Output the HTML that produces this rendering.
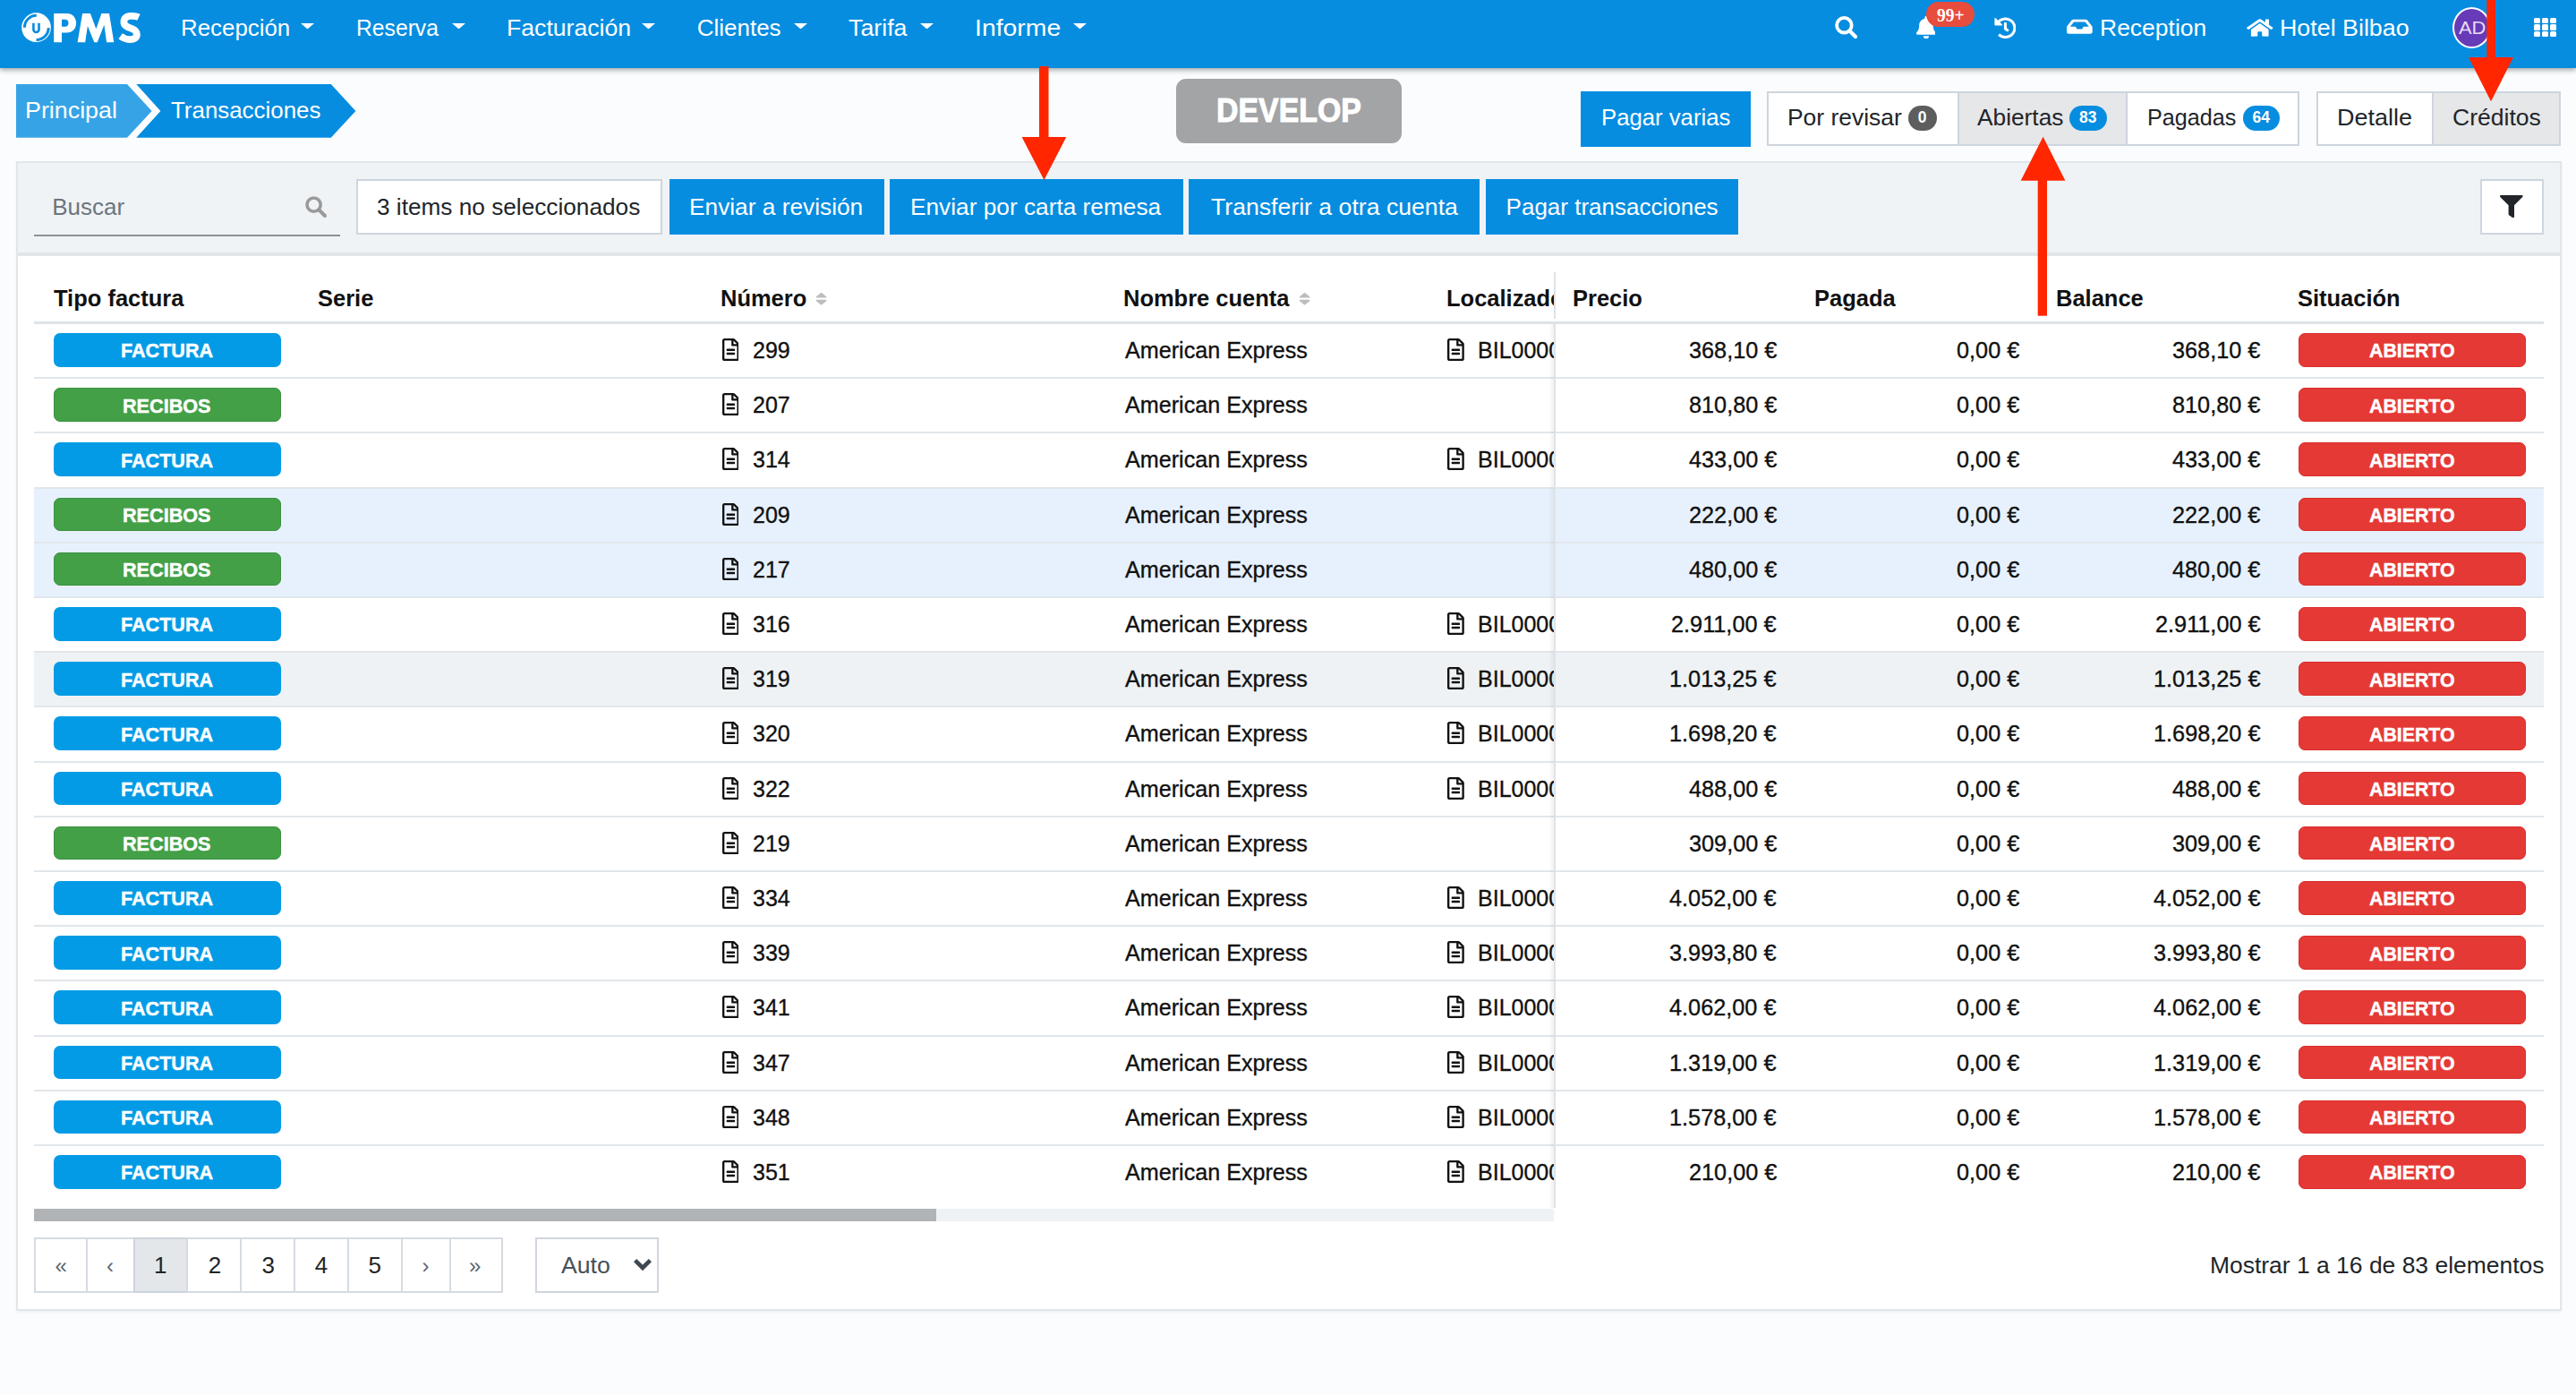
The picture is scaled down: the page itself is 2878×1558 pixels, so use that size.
<!DOCTYPE html>
<html><head><meta charset="utf-8"><style>
html,body{margin:0;padding:0;width:2878px;height:1558px;overflow:hidden;font-family:'Liberation Sans', sans-serif}
</style></head><body>
<div style="position:absolute;left:0px;top:0px;width:2878px;height:1558px;background:#fbfcfd"></div>
<div style="position:absolute;left:0px;top:0px;width:2878px;height:76px;background:#068de0;box-shadow:0 2px 6px rgba(0,0,0,.38)"></div>
<svg style="position:absolute;left:0;top:0" width="170" height="60" viewBox="0 0 170 60">
<circle cx="40.55" cy="30.7" r="16.35" fill="#fff"/>
<path d="M40.8 17.3 A13.4 13.4 0 0 0 27.4 30.7" stroke="#068de0" stroke-width="3.1" fill="none"/>
<path d="M54.3 31.1 A13.6 13.6 0 0 1 40.6 44.4" stroke="#068de0" stroke-width="3" fill="none"/>
<path d="M37.4 25.8 V32.9 a3.05 3.05 0 0 0 6.1 0 V25.8" stroke="#068de0" stroke-width="2.6" fill="none"/>
<path fill="#fff" fill-rule="evenodd" d="M60.2 47.2 V14.9 H74.5 C81 14.9 85.1 19.5 85.1 25.7 C85.1 32 81 36.5 74.5 36.5 H69 V47.2 Z M69 21.8 V29.8 H72.8 C75 29.8 76.5 28.2 76.5 25.8 C76.5 23.4 75 21.8 72.8 21.8 Z"/>
<polygon fill="#fff" points="86.6,47.2 92.1,14.9 100.9,14.9 107.4,32.3 113.4,14.9 122,14.9 127.3,47.2 119.1,47.2 116.4,27.7 108.8,47.2 105.3,47.2 97.9,29 95.2,47.2"/>
<path d="M155 19.2 C151.5 17.5 149 17.8 146 17.8 C141.3 17.8 138.4 20.6 138.4 24.4 C138.4 28.6 142.2 30.2 147 31.9 C151 33.3 152.9 35.2 152.9 38.6 C152.9 42.2 149.6 44.2 145.2 44.2 C141.3 44.2 137.8 42.6 134.6 40.4" stroke="#fff" stroke-width="7.8" fill="none"/>
</svg>
<div style="position:absolute;left:202.41px;top:17.99px;white-space:pre;font-family:'Liberation Sans',sans-serif;font-size:26px;font-weight:400;line-height:26px;color:#fff;transform:scaleX(0.9950);transform-origin:0 0;">Recepción</div>
<svg style="position:absolute;left:336px;top:25.5px" width="15" height="6.5" viewBox="0 0 15 6.5"><path d="M0 0H15L7.5 6.5Z" fill="#fff"/></svg>
<div style="position:absolute;left:398.40px;top:17.99px;white-space:pre;font-family:'Liberation Sans',sans-serif;font-size:26px;font-weight:400;line-height:26px;color:#fff;transform:scaleX(0.9495);transform-origin:0 0;">Reserva</div>
<svg style="position:absolute;left:504.5px;top:25.5px" width="15.0" height="6.5" viewBox="0 0 15.0 6.5"><path d="M0 0H15.0L7.5 6.5Z" fill="#fff"/></svg>
<div style="position:absolute;left:565.75px;top:17.99px;white-space:pre;font-family:'Liberation Sans',sans-serif;font-size:26px;font-weight:400;line-height:26px;color:#fff;transform:scaleX(1.0242);transform-origin:0 0;">Facturación</div>
<svg style="position:absolute;left:717px;top:25.5px" width="15" height="6.5" viewBox="0 0 15 6.5"><path d="M0 0H15L7.5 6.5Z" fill="#fff"/></svg>
<div style="position:absolute;left:778.70px;top:17.99px;white-space:pre;font-family:'Liberation Sans',sans-serif;font-size:26px;font-weight:400;line-height:26px;color:#fff;">Clientes</div>
<svg style="position:absolute;left:886.7px;top:25.5px" width="15.0" height="6.5" viewBox="0 0 15.0 6.5"><path d="M0 0H15.0L7.5 6.5Z" fill="#fff"/></svg>
<div style="position:absolute;left:948.00px;top:17.99px;white-space:pre;font-family:'Liberation Sans',sans-serif;font-size:26px;font-weight:400;line-height:26px;color:#fff;transform:scaleX(1.0297);transform-origin:0 0;">Tarifa</div>
<svg style="position:absolute;left:1028px;top:25.5px" width="15" height="6.5" viewBox="0 0 15 6.5"><path d="M0 0H15L7.5 6.5Z" fill="#fff"/></svg>
<div style="position:absolute;left:1088.52px;top:17.99px;white-space:pre;font-family:'Liberation Sans',sans-serif;font-size:26px;font-weight:400;line-height:26px;color:#fff;transform:scaleX(1.0918);transform-origin:0 0;">Informe</div>
<svg style="position:absolute;left:1198.9px;top:25.5px" width="15.0" height="6.5" viewBox="0 0 15.0 6.5"><path d="M0 0H15.0L7.5 6.5Z" fill="#fff"/></svg>
<div style="position:absolute;left:2345.56px;top:17.99px;white-space:pre;font-family:'Liberation Sans',sans-serif;font-size:26px;font-weight:400;line-height:26px;color:#fff;transform:scaleX(1.0186);transform-origin:0 0;">Reception</div>
<div style="position:absolute;left:2547.44px;top:17.99px;white-space:pre;font-family:'Liberation Sans',sans-serif;font-size:26px;font-weight:400;line-height:26px;color:#fff;transform:scaleX(1.0314);transform-origin:0 0;">Hotel Bilbao</div>
<svg style="position:absolute;left:0;top:0" width="420" height="170">
<polygon points="18,94 142,94 169.6,124 142,153.7 18,153.7" fill="#36a3e6"/>
<polygon points="152.3,94 369.8,94 397.4,124 369.8,153.7 152.3,153.7 179.4,124" fill="#068de0"/>
</svg>
<div style="position:absolute;left:27.84px;top:109.89px;white-space:pre;font-family:'Liberation Sans',sans-serif;font-size:26px;font-weight:400;line-height:26px;color:#fff;transform:scaleX(1.0323);transform-origin:0 0;">Principal</div>
<div style="position:absolute;left:191.40px;top:109.89px;white-space:pre;font-family:'Liberation Sans',sans-serif;font-size:26px;font-weight:400;line-height:26px;color:#fff;transform:scaleX(0.9958);transform-origin:0 0;">Transacciones</div>
<div style="position:absolute;left:1314px;top:88px;width:252px;height:72px;background:#a3a4a6;border-radius:11px"></div>
<div style="position:absolute;left:1358.67px;top:104.98px;white-space:pre;font-family:'Liberation Sans',sans-serif;font-size:37px;font-weight:700;line-height:37px;color:#fff;transform:scaleX(0.9155);transform-origin:0 0;-webkit-text-stroke:1px #fff;">DEVELOP</div>
<div style="position:absolute;left:1766px;top:102px;width:190px;height:62px;background:#068de0"></div>
<div style="position:absolute;left:1788.92px;top:118.39px;white-space:pre;font-family:'Liberation Sans',sans-serif;font-size:26px;font-weight:400;line-height:26px;color:#fff;transform:scaleX(0.9888);transform-origin:0 0;">Pagar varias</div>
<div style="position:absolute;left:1974.3px;top:102.3px;width:594.7px;height:61.10000000000001px;background:#fff;border:2px solid #cdd5de;box-sizing:border-box"></div>
<div style="position:absolute;left:2186.5px;top:102.3px;width:190.9000000000001px;height:61.10000000000001px;background:#e6e7e9;border:2px solid #cdd5de;box-sizing:border-box"></div>
<div style="position:absolute;left:2588.3px;top:102.3px;width:273.0px;height:61.10000000000001px;background:#fff;border:2px solid #cdd5de;box-sizing:border-box"></div>
<div style="position:absolute;left:2716.6px;top:102.3px;width:144.70000000000027px;height:61.10000000000001px;background:#e6e7e9;border:2px solid #cdd5de;box-sizing:border-box"></div>
<div style="position:absolute;left:1996.97px;top:118.19px;white-space:pre;font-family:'Liberation Sans',sans-serif;font-size:26px;font-weight:400;line-height:26px;color:#212529;transform:scaleX(1.0163);transform-origin:0 0;">Por revisar</div>
<div style="position:absolute;left:2132px;top:118px;width:31.59999999999991px;height:27.69999999999999px;background:#5d5d5d;border-radius:14px"></div>
<div style="position:absolute;left:2142.80px;top:122.79px;white-space:pre;font-family:'Liberation Sans',sans-serif;font-size:17.5px;font-weight:700;line-height:17.5px;color:#fff;">0</div>
<div style="position:absolute;left:2209.00px;top:118.19px;white-space:pre;font-family:'Liberation Sans',sans-serif;font-size:26px;font-weight:400;line-height:26px;color:#212529;transform:scaleX(1.0105);transform-origin:0 0;">Abiertas</div>
<div style="position:absolute;left:2312px;top:118px;width:41.69999999999982px;height:27.69999999999999px;background:#068de0;border-radius:14px"></div>
<div style="position:absolute;left:2323.00px;top:122.79px;white-space:pre;font-family:'Liberation Sans',sans-serif;font-size:17.5px;font-weight:700;line-height:17.5px;color:#fff;">83</div>
<div style="position:absolute;left:2398.86px;top:118.19px;white-space:pre;font-family:'Liberation Sans',sans-serif;font-size:26px;font-weight:400;line-height:26px;color:#212529;transform:scaleX(0.9690);transform-origin:0 0;">Pagadas</div>
<div style="position:absolute;left:2506.4px;top:118px;width:41.09999999999991px;height:27.69999999999999px;background:#068de0;border-radius:14px"></div>
<div style="position:absolute;left:2516.50px;top:122.79px;white-space:pre;font-family:'Liberation Sans',sans-serif;font-size:17.5px;font-weight:700;line-height:17.5px;color:#fff;">64</div>
<div style="position:absolute;left:2610.63px;top:118.19px;white-space:pre;font-family:'Liberation Sans',sans-serif;font-size:26px;font-weight:400;line-height:26px;color:#212529;transform:scaleX(1.0372);transform-origin:0 0;">Detalle</div>
<div style="position:absolute;left:2739.58px;top:118.19px;white-space:pre;font-family:'Liberation Sans',sans-serif;font-size:26px;font-weight:400;line-height:26px;color:#212529;transform:scaleX(1.0211);transform-origin:0 0;">Créditos</div>
<div style="position:absolute;left:18px;top:179.5px;width:2844px;height:1284.5px;background:#fff;border:2px solid #e1e6ea;box-sizing:border-box;box-shadow:0 2px 3px rgba(0,0,0,.05)"></div>
<div style="position:absolute;left:18px;top:179.5px;width:2844px;height:106.5px;background:#eff3f6;border:2px solid #e1e6ea;border-bottom-width:4px;box-sizing:border-box"></div>
<div style="position:absolute;left:38px;top:261.8px;width:342px;height:2.3999999999999773px;background:#8f9194"></div>
<div style="position:absolute;left:58.21px;top:217.89px;white-space:pre;font-family:'Liberation Sans',sans-serif;font-size:26px;font-weight:400;line-height:26px;color:#6c757d;">Buscar</div>
<div style="position:absolute;left:398px;top:200px;width:341.5px;height:62px;background:#fff;border:2px solid #cdd5de;box-sizing:border-box"></div>
<div style="position:absolute;left:420.99px;top:217.89px;white-space:pre;font-family:'Liberation Sans',sans-serif;font-size:26px;font-weight:400;line-height:26px;color:#212529;transform:scaleX(1.0079);transform-origin:0 0;">3 items no seleccionados</div>
<div style="position:absolute;left:748px;top:200px;width:240px;height:62px;background:#068de0"></div>
<div style="position:absolute;left:770.48px;top:217.89px;white-space:pre;font-family:'Liberation Sans',sans-serif;font-size:26px;font-weight:400;line-height:26px;color:#fff;transform:scaleX(1.0106);transform-origin:0 0;">Enviar a revisión</div>
<div style="position:absolute;left:994.4px;top:200px;width:327.19999999999993px;height:62px;background:#068de0"></div>
<div style="position:absolute;left:1016.78px;top:217.89px;white-space:pre;font-family:'Liberation Sans',sans-serif;font-size:26px;font-weight:400;line-height:26px;color:#fff;transform:scaleX(1.0098);transform-origin:0 0;">Enviar por carta remesa</div>
<div style="position:absolute;left:1328.2px;top:200px;width:325.29999999999995px;height:62px;background:#068de0"></div>
<div style="position:absolute;left:1352.70px;top:217.89px;white-space:pre;font-family:'Liberation Sans',sans-serif;font-size:26px;font-weight:400;line-height:26px;color:#fff;transform:scaleX(1.0245);transform-origin:0 0;">Transferir a otra cuenta</div>
<div style="position:absolute;left:1660px;top:200px;width:281.5999999999999px;height:62px;background:#068de0"></div>
<div style="position:absolute;left:1682.60px;top:217.89px;white-space:pre;font-family:'Liberation Sans',sans-serif;font-size:26px;font-weight:400;line-height:26px;color:#fff;">Pagar transacciones</div>
<div style="position:absolute;left:2771px;top:200px;width:70.5px;height:62px;background:#fff;border:2px solid #cdd5de;box-sizing:border-box"></div>
<div style="position:absolute;left:60.10px;top:320.19px;white-space:pre;font-family:'Liberation Sans',sans-serif;font-size:26px;font-weight:700;line-height:26px;color:#111;transform:scaleX(0.9800);transform-origin:0 0;">Tipo factura</div>
<div style="position:absolute;left:355.42px;top:320.19px;white-space:pre;font-family:'Liberation Sans',sans-serif;font-size:26px;font-weight:700;line-height:26px;color:#111;transform:scaleX(0.9800);transform-origin:0 0;">Serie</div>
<div style="position:absolute;left:805.04px;top:320.19px;white-space:pre;font-family:'Liberation Sans',sans-serif;font-size:26px;font-weight:700;line-height:26px;color:#111;transform:scaleX(0.9800);transform-origin:0 0;">Número</div>
<div style="position:absolute;left:1254.74px;top:320.19px;white-space:pre;font-family:'Liberation Sans',sans-serif;font-size:26px;font-weight:700;line-height:26px;color:#111;transform:scaleX(0.9800);transform-origin:0 0;">Nombre cuenta</div>
<div style="position:absolute;left:1756.54px;top:320.19px;white-space:pre;font-family:'Liberation Sans',sans-serif;font-size:26px;font-weight:700;line-height:26px;color:#111;transform:scaleX(0.9800);transform-origin:0 0;">Precio</div>
<div style="position:absolute;left:2026.54px;top:320.19px;white-space:pre;font-family:'Liberation Sans',sans-serif;font-size:26px;font-weight:700;line-height:26px;color:#111;transform:scaleX(0.9800);transform-origin:0 0;">Pagada</div>
<div style="position:absolute;left:2297.04px;top:320.19px;white-space:pre;font-family:'Liberation Sans',sans-serif;font-size:26px;font-weight:700;line-height:26px;color:#111;transform:scaleX(0.9800);transform-origin:0 0;">Balance</div>
<div style="position:absolute;left:2567.02px;top:320.19px;white-space:pre;font-family:'Liberation Sans',sans-serif;font-size:26px;font-weight:700;line-height:26px;color:#111;transform:scaleX(0.9800);transform-origin:0 0;">Situación</div>
<div style="position:absolute;left:1596px;top:0;width:140px;height:1558px;overflow:hidden"><div style="position:absolute;left:19.64px;top:320.19px;white-space:pre;font-family:'Liberation Sans',sans-serif;font-size:26px;font-weight:700;line-height:26px;color:#111;transform:scaleX(0.9800);transform-origin:0 0;">Localizador</div></div>
<div style="position:absolute;left:38px;top:358.5px;width:2804px;height:3.5px;background:#dee3e8"></div>
<div style="position:absolute;left:38px;top:421.2px;width:2804px;height:2.0px;background:#e1e6ea"></div>
<div style="position:absolute;left:60px;top:372.0px;width:254px;height:37.69999999999999px;background:#039be5;border-radius:7px"></div>
<div style="position:absolute;left:135.02px;top:381.38px;white-space:pre;font-family:'Liberation Sans',sans-serif;font-size:22px;font-weight:700;line-height:22px;color:#fff;transform:scaleX(0.9808);transform-origin:0 0;-webkit-text-stroke:0.45px #fff;">FACTURA</div>
<div style="position:absolute;left:841.24px;top:377.99px;white-space:pre;font-family:'Liberation Sans',sans-serif;font-size:26px;font-weight:400;line-height:26px;color:#111;transform:scaleX(0.9620);transform-origin:0 0;-webkit-text-stroke:0.35px #111;">299</div>
<svg style="position:absolute;left:806.7px;top:378.0px" width="18.80" height="25.00" viewBox="0 0 384 512" preserveAspectRatio="none"><path d="M288 248v28c0 6.6-5.4 12-12 12H108c-6.6 0-12-5.4-12-12v-28c0-6.6 5.4-12 12-12h168c6.6 0 12 5.4 12 12zm-12 72H108c-6.6 0-12 5.4-12 12v28c0 6.6 5.4 12 12 12h168c6.6 0 12-5.4 12-12v-28c0-6.6-5.4-12-12-12zm108-188.1V464c0 26.5-21.5 48-48 48H48c-26.5 0-48-21.5-48-48V48C0 21.5 21.5 0 48 0h204.1C264.8 0 277 5.1 286 14.1L369.9 98c9 8.9 14.1 21.2 14.1 33.9zm-128-80V128h76.1L256 51.9zM336 464V176H232c-13.3 0-24-10.7-24-24V48H48v416h288z" fill="#111" /></svg>
<svg style="position:absolute;left:1616.9px;top:378.0px" width="18.80" height="25.00" viewBox="0 0 384 512" preserveAspectRatio="none"><path d="M288 248v28c0 6.6-5.4 12-12 12H108c-6.6 0-12-5.4-12-12v-28c0-6.6 5.4-12 12-12h168c6.6 0 12 5.4 12 12zm-12 72H108c-6.6 0-12 5.4-12 12v28c0 6.6 5.4 12 12 12h168c6.6 0 12-5.4 12-12v-28c0-6.6-5.4-12-12-12zm108-188.1V464c0 26.5-21.5 48-48 48H48c-26.5 0-48-21.5-48-48V48C0 21.5 21.5 0 48 0h204.1C264.8 0 277 5.1 286 14.1L369.9 98c9 8.9 14.1 21.2 14.1 33.9zm-128-80V128h76.1L256 51.9zM336 464V176H232c-13.3 0-24-10.7-24-24V48H48v416h288z" fill="#111" /></svg>
<div style="position:absolute;left:1596px;top:0;width:140px;height:1558px;overflow:hidden"><div style="position:absolute;left:55.08px;top:377.99px;white-space:pre;font-family:'Liberation Sans',sans-serif;font-size:26px;font-weight:400;line-height:26px;color:#111;transform:scaleX(0.9620);transform-origin:0 0;-webkit-text-stroke:0.35px #111;">BIL0000299</div></div>
<div style="position:absolute;left:1256.80px;top:377.99px;white-space:pre;font-family:'Liberation Sans',sans-serif;font-size:26px;font-weight:400;line-height:26px;color:#111;transform:scaleX(0.9667);transform-origin:0 0;-webkit-text-stroke:0.35px #111;">American Express</div>
<div style="position:absolute;left:1886.83px;top:377.99px;white-space:pre;font-family:'Liberation Sans',sans-serif;font-size:26px;font-weight:400;line-height:26px;color:#111;transform:scaleX(0.9720);transform-origin:0 0;-webkit-text-stroke:0.35px #111;">368,10 €</div>
<div style="position:absolute;left:2185.52px;top:377.99px;white-space:pre;font-family:'Liberation Sans',sans-serif;font-size:26px;font-weight:400;line-height:26px;color:#111;transform:scaleX(0.9720);transform-origin:0 0;-webkit-text-stroke:0.35px #111;">0,00 €</div>
<div style="position:absolute;left:2427.33px;top:377.99px;white-space:pre;font-family:'Liberation Sans',sans-serif;font-size:26px;font-weight:400;line-height:26px;color:#111;transform:scaleX(0.9720);transform-origin:0 0;-webkit-text-stroke:0.35px #111;">368,10 €</div>
<div style="position:absolute;left:2568px;top:372.0px;width:254px;height:37.69999999999999px;background:#e53935;border:1px solid #d8302c;box-sizing:border-box;border-radius:7px"></div>
<div style="position:absolute;left:2647.25px;top:381.38px;white-space:pre;font-family:'Liberation Sans',sans-serif;font-size:22px;font-weight:700;line-height:22px;color:#fff;transform:scaleX(0.9694);transform-origin:0 0;-webkit-text-stroke:0.45px #fff;">ABIERTO</div>
<div style="position:absolute;left:38px;top:482.4px;width:2804px;height:2.0px;background:#e1e6ea"></div>
<div style="position:absolute;left:60px;top:433.2px;width:254px;height:37.69999999999999px;background:#43a047;border:1px solid #3b9140;box-sizing:border-box;border-radius:7px"></div>
<div style="position:absolute;left:137.37px;top:442.58px;white-space:pre;font-family:'Liberation Sans',sans-serif;font-size:22px;font-weight:700;line-height:22px;color:#fff;transform:scaleX(0.9828);transform-origin:0 0;-webkit-text-stroke:0.45px #fff;">RECIBOS</div>
<div style="position:absolute;left:841.24px;top:439.19px;white-space:pre;font-family:'Liberation Sans',sans-serif;font-size:26px;font-weight:400;line-height:26px;color:#111;transform:scaleX(0.9620);transform-origin:0 0;-webkit-text-stroke:0.35px #111;">207</div>
<svg style="position:absolute;left:806.7px;top:439.2px" width="18.80" height="25.00" viewBox="0 0 384 512" preserveAspectRatio="none"><path d="M288 248v28c0 6.6-5.4 12-12 12H108c-6.6 0-12-5.4-12-12v-28c0-6.6 5.4-12 12-12h168c6.6 0 12 5.4 12 12zm-12 72H108c-6.6 0-12 5.4-12 12v28c0 6.6 5.4 12 12 12h168c6.6 0 12-5.4 12-12v-28c0-6.6-5.4-12-12-12zm108-188.1V464c0 26.5-21.5 48-48 48H48c-26.5 0-48-21.5-48-48V48C0 21.5 21.5 0 48 0h204.1C264.8 0 277 5.1 286 14.1L369.9 98c9 8.9 14.1 21.2 14.1 33.9zm-128-80V128h76.1L256 51.9zM336 464V176H232c-13.3 0-24-10.7-24-24V48H48v416h288z" fill="#111" /></svg>
<div style="position:absolute;left:1256.80px;top:439.19px;white-space:pre;font-family:'Liberation Sans',sans-serif;font-size:26px;font-weight:400;line-height:26px;color:#111;transform:scaleX(0.9667);transform-origin:0 0;-webkit-text-stroke:0.35px #111;">American Express</div>
<div style="position:absolute;left:1886.83px;top:439.19px;white-space:pre;font-family:'Liberation Sans',sans-serif;font-size:26px;font-weight:400;line-height:26px;color:#111;transform:scaleX(0.9720);transform-origin:0 0;-webkit-text-stroke:0.35px #111;">810,80 €</div>
<div style="position:absolute;left:2185.52px;top:439.19px;white-space:pre;font-family:'Liberation Sans',sans-serif;font-size:26px;font-weight:400;line-height:26px;color:#111;transform:scaleX(0.9720);transform-origin:0 0;-webkit-text-stroke:0.35px #111;">0,00 €</div>
<div style="position:absolute;left:2427.33px;top:439.19px;white-space:pre;font-family:'Liberation Sans',sans-serif;font-size:26px;font-weight:400;line-height:26px;color:#111;transform:scaleX(0.9720);transform-origin:0 0;-webkit-text-stroke:0.35px #111;">810,80 €</div>
<div style="position:absolute;left:2568px;top:433.2px;width:254px;height:37.69999999999999px;background:#e53935;border:1px solid #d8302c;box-sizing:border-box;border-radius:7px"></div>
<div style="position:absolute;left:2647.25px;top:442.58px;white-space:pre;font-family:'Liberation Sans',sans-serif;font-size:22px;font-weight:700;line-height:22px;color:#fff;transform:scaleX(0.9694);transform-origin:0 0;-webkit-text-stroke:0.45px #fff;">ABIERTO</div>
<div style="position:absolute;left:38px;top:543.6px;width:2804px;height:2.0px;background:#e1e6ea"></div>
<div style="position:absolute;left:60px;top:494.4px;width:254px;height:37.700000000000045px;background:#039be5;border-radius:7px"></div>
<div style="position:absolute;left:135.02px;top:503.78px;white-space:pre;font-family:'Liberation Sans',sans-serif;font-size:22px;font-weight:700;line-height:22px;color:#fff;transform:scaleX(0.9808);transform-origin:0 0;-webkit-text-stroke:0.45px #fff;">FACTURA</div>
<div style="position:absolute;left:841.24px;top:500.39px;white-space:pre;font-family:'Liberation Sans',sans-serif;font-size:26px;font-weight:400;line-height:26px;color:#111;transform:scaleX(0.9620);transform-origin:0 0;-webkit-text-stroke:0.35px #111;">314</div>
<svg style="position:absolute;left:806.7px;top:500.4px" width="18.80" height="25.00" viewBox="0 0 384 512" preserveAspectRatio="none"><path d="M288 248v28c0 6.6-5.4 12-12 12H108c-6.6 0-12-5.4-12-12v-28c0-6.6 5.4-12 12-12h168c6.6 0 12 5.4 12 12zm-12 72H108c-6.6 0-12 5.4-12 12v28c0 6.6 5.4 12 12 12h168c6.6 0 12-5.4 12-12v-28c0-6.6-5.4-12-12-12zm108-188.1V464c0 26.5-21.5 48-48 48H48c-26.5 0-48-21.5-48-48V48C0 21.5 21.5 0 48 0h204.1C264.8 0 277 5.1 286 14.1L369.9 98c9 8.9 14.1 21.2 14.1 33.9zm-128-80V128h76.1L256 51.9zM336 464V176H232c-13.3 0-24-10.7-24-24V48H48v416h288z" fill="#111" /></svg>
<svg style="position:absolute;left:1616.9px;top:500.4px" width="18.80" height="25.00" viewBox="0 0 384 512" preserveAspectRatio="none"><path d="M288 248v28c0 6.6-5.4 12-12 12H108c-6.6 0-12-5.4-12-12v-28c0-6.6 5.4-12 12-12h168c6.6 0 12 5.4 12 12zm-12 72H108c-6.6 0-12 5.4-12 12v28c0 6.6 5.4 12 12 12h168c6.6 0 12-5.4 12-12v-28c0-6.6-5.4-12-12-12zm108-188.1V464c0 26.5-21.5 48-48 48H48c-26.5 0-48-21.5-48-48V48C0 21.5 21.5 0 48 0h204.1C264.8 0 277 5.1 286 14.1L369.9 98c9 8.9 14.1 21.2 14.1 33.9zm-128-80V128h76.1L256 51.9zM336 464V176H232c-13.3 0-24-10.7-24-24V48H48v416h288z" fill="#111" /></svg>
<div style="position:absolute;left:1596px;top:0;width:140px;height:1558px;overflow:hidden"><div style="position:absolute;left:55.08px;top:500.39px;white-space:pre;font-family:'Liberation Sans',sans-serif;font-size:26px;font-weight:400;line-height:26px;color:#111;transform:scaleX(0.9620);transform-origin:0 0;-webkit-text-stroke:0.35px #111;">BIL0000314</div></div>
<div style="position:absolute;left:1256.80px;top:500.39px;white-space:pre;font-family:'Liberation Sans',sans-serif;font-size:26px;font-weight:400;line-height:26px;color:#111;transform:scaleX(0.9667);transform-origin:0 0;-webkit-text-stroke:0.35px #111;">American Express</div>
<div style="position:absolute;left:1886.83px;top:500.39px;white-space:pre;font-family:'Liberation Sans',sans-serif;font-size:26px;font-weight:400;line-height:26px;color:#111;transform:scaleX(0.9720);transform-origin:0 0;-webkit-text-stroke:0.35px #111;">433,00 €</div>
<div style="position:absolute;left:2185.52px;top:500.39px;white-space:pre;font-family:'Liberation Sans',sans-serif;font-size:26px;font-weight:400;line-height:26px;color:#111;transform:scaleX(0.9720);transform-origin:0 0;-webkit-text-stroke:0.35px #111;">0,00 €</div>
<div style="position:absolute;left:2427.33px;top:500.39px;white-space:pre;font-family:'Liberation Sans',sans-serif;font-size:26px;font-weight:400;line-height:26px;color:#111;transform:scaleX(0.9720);transform-origin:0 0;-webkit-text-stroke:0.35px #111;">433,00 €</div>
<div style="position:absolute;left:2568px;top:494.4px;width:254px;height:37.700000000000045px;background:#e53935;border:1px solid #d8302c;box-sizing:border-box;border-radius:7px"></div>
<div style="position:absolute;left:2647.25px;top:503.78px;white-space:pre;font-family:'Liberation Sans',sans-serif;font-size:22px;font-weight:700;line-height:22px;color:#fff;transform:scaleX(0.9694);transform-origin:0 0;-webkit-text-stroke:0.45px #fff;">ABIERTO</div>
<div style="position:absolute;left:38px;top:545.6px;width:2804px;height:61.200000000000045px;background:#e7f1fd"></div>
<div style="position:absolute;left:38px;top:604.8000000000001px;width:2804px;height:2.0px;background:#e1e6ea"></div>
<div style="position:absolute;left:60px;top:555.6px;width:254px;height:37.700000000000045px;background:#43a047;border:1px solid #3b9140;box-sizing:border-box;border-radius:7px"></div>
<div style="position:absolute;left:137.37px;top:564.98px;white-space:pre;font-family:'Liberation Sans',sans-serif;font-size:22px;font-weight:700;line-height:22px;color:#fff;transform:scaleX(0.9828);transform-origin:0 0;-webkit-text-stroke:0.45px #fff;">RECIBOS</div>
<div style="position:absolute;left:841.24px;top:561.59px;white-space:pre;font-family:'Liberation Sans',sans-serif;font-size:26px;font-weight:400;line-height:26px;color:#111;transform:scaleX(0.9620);transform-origin:0 0;-webkit-text-stroke:0.35px #111;">209</div>
<svg style="position:absolute;left:806.7px;top:561.6px" width="18.80" height="25.00" viewBox="0 0 384 512" preserveAspectRatio="none"><path d="M288 248v28c0 6.6-5.4 12-12 12H108c-6.6 0-12-5.4-12-12v-28c0-6.6 5.4-12 12-12h168c6.6 0 12 5.4 12 12zm-12 72H108c-6.6 0-12 5.4-12 12v28c0 6.6 5.4 12 12 12h168c6.6 0 12-5.4 12-12v-28c0-6.6-5.4-12-12-12zm108-188.1V464c0 26.5-21.5 48-48 48H48c-26.5 0-48-21.5-48-48V48C0 21.5 21.5 0 48 0h204.1C264.8 0 277 5.1 286 14.1L369.9 98c9 8.9 14.1 21.2 14.1 33.9zm-128-80V128h76.1L256 51.9zM336 464V176H232c-13.3 0-24-10.7-24-24V48H48v416h288z" fill="#111" /></svg>
<div style="position:absolute;left:1256.80px;top:561.59px;white-space:pre;font-family:'Liberation Sans',sans-serif;font-size:26px;font-weight:400;line-height:26px;color:#111;transform:scaleX(0.9667);transform-origin:0 0;-webkit-text-stroke:0.35px #111;">American Express</div>
<div style="position:absolute;left:1886.83px;top:561.59px;white-space:pre;font-family:'Liberation Sans',sans-serif;font-size:26px;font-weight:400;line-height:26px;color:#111;transform:scaleX(0.9720);transform-origin:0 0;-webkit-text-stroke:0.35px #111;">222,00 €</div>
<div style="position:absolute;left:2185.52px;top:561.59px;white-space:pre;font-family:'Liberation Sans',sans-serif;font-size:26px;font-weight:400;line-height:26px;color:#111;transform:scaleX(0.9720);transform-origin:0 0;-webkit-text-stroke:0.35px #111;">0,00 €</div>
<div style="position:absolute;left:2427.33px;top:561.59px;white-space:pre;font-family:'Liberation Sans',sans-serif;font-size:26px;font-weight:400;line-height:26px;color:#111;transform:scaleX(0.9720);transform-origin:0 0;-webkit-text-stroke:0.35px #111;">222,00 €</div>
<div style="position:absolute;left:2568px;top:555.6px;width:254px;height:37.700000000000045px;background:#e53935;border:1px solid #d8302c;box-sizing:border-box;border-radius:7px"></div>
<div style="position:absolute;left:2647.25px;top:564.98px;white-space:pre;font-family:'Liberation Sans',sans-serif;font-size:22px;font-weight:700;line-height:22px;color:#fff;transform:scaleX(0.9694);transform-origin:0 0;-webkit-text-stroke:0.45px #fff;">ABIERTO</div>
<div style="position:absolute;left:38px;top:606.8px;width:2804px;height:61.200000000000045px;background:#e7f1fd"></div>
<div style="position:absolute;left:38px;top:666.0px;width:2804px;height:2.0px;background:#e1e6ea"></div>
<div style="position:absolute;left:60px;top:616.8px;width:254px;height:37.700000000000045px;background:#43a047;border:1px solid #3b9140;box-sizing:border-box;border-radius:7px"></div>
<div style="position:absolute;left:137.37px;top:626.18px;white-space:pre;font-family:'Liberation Sans',sans-serif;font-size:22px;font-weight:700;line-height:22px;color:#fff;transform:scaleX(0.9828);transform-origin:0 0;-webkit-text-stroke:0.45px #fff;">RECIBOS</div>
<div style="position:absolute;left:841.24px;top:622.79px;white-space:pre;font-family:'Liberation Sans',sans-serif;font-size:26px;font-weight:400;line-height:26px;color:#111;transform:scaleX(0.9620);transform-origin:0 0;-webkit-text-stroke:0.35px #111;">217</div>
<svg style="position:absolute;left:806.7px;top:622.8px" width="18.80" height="25.00" viewBox="0 0 384 512" preserveAspectRatio="none"><path d="M288 248v28c0 6.6-5.4 12-12 12H108c-6.6 0-12-5.4-12-12v-28c0-6.6 5.4-12 12-12h168c6.6 0 12 5.4 12 12zm-12 72H108c-6.6 0-12 5.4-12 12v28c0 6.6 5.4 12 12 12h168c6.6 0 12-5.4 12-12v-28c0-6.6-5.4-12-12-12zm108-188.1V464c0 26.5-21.5 48-48 48H48c-26.5 0-48-21.5-48-48V48C0 21.5 21.5 0 48 0h204.1C264.8 0 277 5.1 286 14.1L369.9 98c9 8.9 14.1 21.2 14.1 33.9zm-128-80V128h76.1L256 51.9zM336 464V176H232c-13.3 0-24-10.7-24-24V48H48v416h288z" fill="#111" /></svg>
<div style="position:absolute;left:1256.80px;top:622.79px;white-space:pre;font-family:'Liberation Sans',sans-serif;font-size:26px;font-weight:400;line-height:26px;color:#111;transform:scaleX(0.9667);transform-origin:0 0;-webkit-text-stroke:0.35px #111;">American Express</div>
<div style="position:absolute;left:1886.83px;top:622.79px;white-space:pre;font-family:'Liberation Sans',sans-serif;font-size:26px;font-weight:400;line-height:26px;color:#111;transform:scaleX(0.9720);transform-origin:0 0;-webkit-text-stroke:0.35px #111;">480,00 €</div>
<div style="position:absolute;left:2185.52px;top:622.79px;white-space:pre;font-family:'Liberation Sans',sans-serif;font-size:26px;font-weight:400;line-height:26px;color:#111;transform:scaleX(0.9720);transform-origin:0 0;-webkit-text-stroke:0.35px #111;">0,00 €</div>
<div style="position:absolute;left:2427.33px;top:622.79px;white-space:pre;font-family:'Liberation Sans',sans-serif;font-size:26px;font-weight:400;line-height:26px;color:#111;transform:scaleX(0.9720);transform-origin:0 0;-webkit-text-stroke:0.35px #111;">480,00 €</div>
<div style="position:absolute;left:2568px;top:616.8px;width:254px;height:37.700000000000045px;background:#e53935;border:1px solid #d8302c;box-sizing:border-box;border-radius:7px"></div>
<div style="position:absolute;left:2647.25px;top:626.18px;white-space:pre;font-family:'Liberation Sans',sans-serif;font-size:22px;font-weight:700;line-height:22px;color:#fff;transform:scaleX(0.9694);transform-origin:0 0;-webkit-text-stroke:0.45px #fff;">ABIERTO</div>
<div style="position:absolute;left:38px;top:727.2px;width:2804px;height:2.0px;background:#e1e6ea"></div>
<div style="position:absolute;left:60px;top:678.0px;width:254px;height:37.700000000000045px;background:#039be5;border-radius:7px"></div>
<div style="position:absolute;left:135.02px;top:687.38px;white-space:pre;font-family:'Liberation Sans',sans-serif;font-size:22px;font-weight:700;line-height:22px;color:#fff;transform:scaleX(0.9808);transform-origin:0 0;-webkit-text-stroke:0.45px #fff;">FACTURA</div>
<div style="position:absolute;left:841.24px;top:683.99px;white-space:pre;font-family:'Liberation Sans',sans-serif;font-size:26px;font-weight:400;line-height:26px;color:#111;transform:scaleX(0.9620);transform-origin:0 0;-webkit-text-stroke:0.35px #111;">316</div>
<svg style="position:absolute;left:806.7px;top:684.0px" width="18.80" height="25.00" viewBox="0 0 384 512" preserveAspectRatio="none"><path d="M288 248v28c0 6.6-5.4 12-12 12H108c-6.6 0-12-5.4-12-12v-28c0-6.6 5.4-12 12-12h168c6.6 0 12 5.4 12 12zm-12 72H108c-6.6 0-12 5.4-12 12v28c0 6.6 5.4 12 12 12h168c6.6 0 12-5.4 12-12v-28c0-6.6-5.4-12-12-12zm108-188.1V464c0 26.5-21.5 48-48 48H48c-26.5 0-48-21.5-48-48V48C0 21.5 21.5 0 48 0h204.1C264.8 0 277 5.1 286 14.1L369.9 98c9 8.9 14.1 21.2 14.1 33.9zm-128-80V128h76.1L256 51.9zM336 464V176H232c-13.3 0-24-10.7-24-24V48H48v416h288z" fill="#111" /></svg>
<svg style="position:absolute;left:1616.9px;top:684.0px" width="18.80" height="25.00" viewBox="0 0 384 512" preserveAspectRatio="none"><path d="M288 248v28c0 6.6-5.4 12-12 12H108c-6.6 0-12-5.4-12-12v-28c0-6.6 5.4-12 12-12h168c6.6 0 12 5.4 12 12zm-12 72H108c-6.6 0-12 5.4-12 12v28c0 6.6 5.4 12 12 12h168c6.6 0 12-5.4 12-12v-28c0-6.6-5.4-12-12-12zm108-188.1V464c0 26.5-21.5 48-48 48H48c-26.5 0-48-21.5-48-48V48C0 21.5 21.5 0 48 0h204.1C264.8 0 277 5.1 286 14.1L369.9 98c9 8.9 14.1 21.2 14.1 33.9zm-128-80V128h76.1L256 51.9zM336 464V176H232c-13.3 0-24-10.7-24-24V48H48v416h288z" fill="#111" /></svg>
<div style="position:absolute;left:1596px;top:0;width:140px;height:1558px;overflow:hidden"><div style="position:absolute;left:55.08px;top:683.99px;white-space:pre;font-family:'Liberation Sans',sans-serif;font-size:26px;font-weight:400;line-height:26px;color:#111;transform:scaleX(0.9620);transform-origin:0 0;-webkit-text-stroke:0.35px #111;">BIL0000316</div></div>
<div style="position:absolute;left:1256.80px;top:683.99px;white-space:pre;font-family:'Liberation Sans',sans-serif;font-size:26px;font-weight:400;line-height:26px;color:#111;transform:scaleX(0.9667);transform-origin:0 0;-webkit-text-stroke:0.35px #111;">American Express</div>
<div style="position:absolute;left:1867.39px;top:683.99px;white-space:pre;font-family:'Liberation Sans',sans-serif;font-size:26px;font-weight:400;line-height:26px;color:#111;transform:scaleX(0.9720);transform-origin:0 0;-webkit-text-stroke:0.35px #111;">2.911,00 €</div>
<div style="position:absolute;left:2185.52px;top:683.99px;white-space:pre;font-family:'Liberation Sans',sans-serif;font-size:26px;font-weight:400;line-height:26px;color:#111;transform:scaleX(0.9720);transform-origin:0 0;-webkit-text-stroke:0.35px #111;">0,00 €</div>
<div style="position:absolute;left:2407.89px;top:683.99px;white-space:pre;font-family:'Liberation Sans',sans-serif;font-size:26px;font-weight:400;line-height:26px;color:#111;transform:scaleX(0.9720);transform-origin:0 0;-webkit-text-stroke:0.35px #111;">2.911,00 €</div>
<div style="position:absolute;left:2568px;top:678.0px;width:254px;height:37.700000000000045px;background:#e53935;border:1px solid #d8302c;box-sizing:border-box;border-radius:7px"></div>
<div style="position:absolute;left:2647.25px;top:687.38px;white-space:pre;font-family:'Liberation Sans',sans-serif;font-size:22px;font-weight:700;line-height:22px;color:#fff;transform:scaleX(0.9694);transform-origin:0 0;-webkit-text-stroke:0.45px #fff;">ABIERTO</div>
<div style="position:absolute;left:38px;top:729.2px;width:2804px;height:61.200000000000045px;background:#eef2f5"></div>
<div style="position:absolute;left:38px;top:788.4000000000001px;width:2804px;height:2.0px;background:#e1e6ea"></div>
<div style="position:absolute;left:60px;top:739.2px;width:254px;height:37.700000000000045px;background:#039be5;border-radius:7px"></div>
<div style="position:absolute;left:135.02px;top:748.58px;white-space:pre;font-family:'Liberation Sans',sans-serif;font-size:22px;font-weight:700;line-height:22px;color:#fff;transform:scaleX(0.9808);transform-origin:0 0;-webkit-text-stroke:0.45px #fff;">FACTURA</div>
<div style="position:absolute;left:841.24px;top:745.19px;white-space:pre;font-family:'Liberation Sans',sans-serif;font-size:26px;font-weight:400;line-height:26px;color:#111;transform:scaleX(0.9620);transform-origin:0 0;-webkit-text-stroke:0.35px #111;">319</div>
<svg style="position:absolute;left:806.7px;top:745.2px" width="18.80" height="25.00" viewBox="0 0 384 512" preserveAspectRatio="none"><path d="M288 248v28c0 6.6-5.4 12-12 12H108c-6.6 0-12-5.4-12-12v-28c0-6.6 5.4-12 12-12h168c6.6 0 12 5.4 12 12zm-12 72H108c-6.6 0-12 5.4-12 12v28c0 6.6 5.4 12 12 12h168c6.6 0 12-5.4 12-12v-28c0-6.6-5.4-12-12-12zm108-188.1V464c0 26.5-21.5 48-48 48H48c-26.5 0-48-21.5-48-48V48C0 21.5 21.5 0 48 0h204.1C264.8 0 277 5.1 286 14.1L369.9 98c9 8.9 14.1 21.2 14.1 33.9zm-128-80V128h76.1L256 51.9zM336 464V176H232c-13.3 0-24-10.7-24-24V48H48v416h288z" fill="#111" /></svg>
<svg style="position:absolute;left:1616.9px;top:745.2px" width="18.80" height="25.00" viewBox="0 0 384 512" preserveAspectRatio="none"><path d="M288 248v28c0 6.6-5.4 12-12 12H108c-6.6 0-12-5.4-12-12v-28c0-6.6 5.4-12 12-12h168c6.6 0 12 5.4 12 12zm-12 72H108c-6.6 0-12 5.4-12 12v28c0 6.6 5.4 12 12 12h168c6.6 0 12-5.4 12-12v-28c0-6.6-5.4-12-12-12zm108-188.1V464c0 26.5-21.5 48-48 48H48c-26.5 0-48-21.5-48-48V48C0 21.5 21.5 0 48 0h204.1C264.8 0 277 5.1 286 14.1L369.9 98c9 8.9 14.1 21.2 14.1 33.9zm-128-80V128h76.1L256 51.9zM336 464V176H232c-13.3 0-24-10.7-24-24V48H48v416h288z" fill="#111" /></svg>
<div style="position:absolute;left:1596px;top:0;width:140px;height:1558px;overflow:hidden"><div style="position:absolute;left:55.08px;top:745.19px;white-space:pre;font-family:'Liberation Sans',sans-serif;font-size:26px;font-weight:400;line-height:26px;color:#111;transform:scaleX(0.9620);transform-origin:0 0;-webkit-text-stroke:0.35px #111;">BIL0000319</div></div>
<div style="position:absolute;left:1256.80px;top:745.19px;white-space:pre;font-family:'Liberation Sans',sans-serif;font-size:26px;font-weight:400;line-height:26px;color:#111;transform:scaleX(0.9667);transform-origin:0 0;-webkit-text-stroke:0.35px #111;">American Express</div>
<div style="position:absolute;left:1865.44px;top:745.19px;white-space:pre;font-family:'Liberation Sans',sans-serif;font-size:26px;font-weight:400;line-height:26px;color:#111;transform:scaleX(0.9720);transform-origin:0 0;-webkit-text-stroke:0.35px #111;">1.013,25 €</div>
<div style="position:absolute;left:2185.52px;top:745.19px;white-space:pre;font-family:'Liberation Sans',sans-serif;font-size:26px;font-weight:400;line-height:26px;color:#111;transform:scaleX(0.9720);transform-origin:0 0;-webkit-text-stroke:0.35px #111;">0,00 €</div>
<div style="position:absolute;left:2405.94px;top:745.19px;white-space:pre;font-family:'Liberation Sans',sans-serif;font-size:26px;font-weight:400;line-height:26px;color:#111;transform:scaleX(0.9720);transform-origin:0 0;-webkit-text-stroke:0.35px #111;">1.013,25 €</div>
<div style="position:absolute;left:2568px;top:739.2px;width:254px;height:37.700000000000045px;background:#e53935;border:1px solid #d8302c;box-sizing:border-box;border-radius:7px"></div>
<div style="position:absolute;left:2647.25px;top:748.58px;white-space:pre;font-family:'Liberation Sans',sans-serif;font-size:22px;font-weight:700;line-height:22px;color:#fff;transform:scaleX(0.9694);transform-origin:0 0;-webkit-text-stroke:0.45px #fff;">ABIERTO</div>
<div style="position:absolute;left:38px;top:849.6000000000001px;width:2804px;height:2.0px;background:#e1e6ea"></div>
<div style="position:absolute;left:60px;top:800.4000000000001px;width:254px;height:37.700000000000045px;background:#039be5;border-radius:7px"></div>
<div style="position:absolute;left:135.02px;top:809.78px;white-space:pre;font-family:'Liberation Sans',sans-serif;font-size:22px;font-weight:700;line-height:22px;color:#fff;transform:scaleX(0.9808);transform-origin:0 0;-webkit-text-stroke:0.45px #fff;">FACTURA</div>
<div style="position:absolute;left:841.24px;top:806.39px;white-space:pre;font-family:'Liberation Sans',sans-serif;font-size:26px;font-weight:400;line-height:26px;color:#111;transform:scaleX(0.9620);transform-origin:0 0;-webkit-text-stroke:0.35px #111;">320</div>
<svg style="position:absolute;left:806.7px;top:806.4000000000001px" width="18.80" height="25.00" viewBox="0 0 384 512" preserveAspectRatio="none"><path d="M288 248v28c0 6.6-5.4 12-12 12H108c-6.6 0-12-5.4-12-12v-28c0-6.6 5.4-12 12-12h168c6.6 0 12 5.4 12 12zm-12 72H108c-6.6 0-12 5.4-12 12v28c0 6.6 5.4 12 12 12h168c6.6 0 12-5.4 12-12v-28c0-6.6-5.4-12-12-12zm108-188.1V464c0 26.5-21.5 48-48 48H48c-26.5 0-48-21.5-48-48V48C0 21.5 21.5 0 48 0h204.1C264.8 0 277 5.1 286 14.1L369.9 98c9 8.9 14.1 21.2 14.1 33.9zm-128-80V128h76.1L256 51.9zM336 464V176H232c-13.3 0-24-10.7-24-24V48H48v416h288z" fill="#111" /></svg>
<svg style="position:absolute;left:1616.9px;top:806.4000000000001px" width="18.80" height="25.00" viewBox="0 0 384 512" preserveAspectRatio="none"><path d="M288 248v28c0 6.6-5.4 12-12 12H108c-6.6 0-12-5.4-12-12v-28c0-6.6 5.4-12 12-12h168c6.6 0 12 5.4 12 12zm-12 72H108c-6.6 0-12 5.4-12 12v28c0 6.6 5.4 12 12 12h168c6.6 0 12-5.4 12-12v-28c0-6.6-5.4-12-12-12zm108-188.1V464c0 26.5-21.5 48-48 48H48c-26.5 0-48-21.5-48-48V48C0 21.5 21.5 0 48 0h204.1C264.8 0 277 5.1 286 14.1L369.9 98c9 8.9 14.1 21.2 14.1 33.9zm-128-80V128h76.1L256 51.9zM336 464V176H232c-13.3 0-24-10.7-24-24V48H48v416h288z" fill="#111" /></svg>
<div style="position:absolute;left:1596px;top:0;width:140px;height:1558px;overflow:hidden"><div style="position:absolute;left:55.08px;top:806.39px;white-space:pre;font-family:'Liberation Sans',sans-serif;font-size:26px;font-weight:400;line-height:26px;color:#111;transform:scaleX(0.9620);transform-origin:0 0;-webkit-text-stroke:0.35px #111;">BIL0000320</div></div>
<div style="position:absolute;left:1256.80px;top:806.39px;white-space:pre;font-family:'Liberation Sans',sans-serif;font-size:26px;font-weight:400;line-height:26px;color:#111;transform:scaleX(0.9667);transform-origin:0 0;-webkit-text-stroke:0.35px #111;">American Express</div>
<div style="position:absolute;left:1865.44px;top:806.39px;white-space:pre;font-family:'Liberation Sans',sans-serif;font-size:26px;font-weight:400;line-height:26px;color:#111;transform:scaleX(0.9720);transform-origin:0 0;-webkit-text-stroke:0.35px #111;">1.698,20 €</div>
<div style="position:absolute;left:2185.52px;top:806.39px;white-space:pre;font-family:'Liberation Sans',sans-serif;font-size:26px;font-weight:400;line-height:26px;color:#111;transform:scaleX(0.9720);transform-origin:0 0;-webkit-text-stroke:0.35px #111;">0,00 €</div>
<div style="position:absolute;left:2405.94px;top:806.39px;white-space:pre;font-family:'Liberation Sans',sans-serif;font-size:26px;font-weight:400;line-height:26px;color:#111;transform:scaleX(0.9720);transform-origin:0 0;-webkit-text-stroke:0.35px #111;">1.698,20 €</div>
<div style="position:absolute;left:2568px;top:800.4000000000001px;width:254px;height:37.700000000000045px;background:#e53935;border:1px solid #d8302c;box-sizing:border-box;border-radius:7px"></div>
<div style="position:absolute;left:2647.25px;top:809.78px;white-space:pre;font-family:'Liberation Sans',sans-serif;font-size:22px;font-weight:700;line-height:22px;color:#fff;transform:scaleX(0.9694);transform-origin:0 0;-webkit-text-stroke:0.45px #fff;">ABIERTO</div>
<div style="position:absolute;left:38px;top:910.8000000000001px;width:2804px;height:2.0px;background:#e1e6ea"></div>
<div style="position:absolute;left:60px;top:861.6px;width:254px;height:37.700000000000045px;background:#039be5;border-radius:7px"></div>
<div style="position:absolute;left:135.02px;top:870.98px;white-space:pre;font-family:'Liberation Sans',sans-serif;font-size:22px;font-weight:700;line-height:22px;color:#fff;transform:scaleX(0.9808);transform-origin:0 0;-webkit-text-stroke:0.45px #fff;">FACTURA</div>
<div style="position:absolute;left:841.24px;top:867.59px;white-space:pre;font-family:'Liberation Sans',sans-serif;font-size:26px;font-weight:400;line-height:26px;color:#111;transform:scaleX(0.9620);transform-origin:0 0;-webkit-text-stroke:0.35px #111;">322</div>
<svg style="position:absolute;left:806.7px;top:867.6px" width="18.80" height="25.00" viewBox="0 0 384 512" preserveAspectRatio="none"><path d="M288 248v28c0 6.6-5.4 12-12 12H108c-6.6 0-12-5.4-12-12v-28c0-6.6 5.4-12 12-12h168c6.6 0 12 5.4 12 12zm-12 72H108c-6.6 0-12 5.4-12 12v28c0 6.6 5.4 12 12 12h168c6.6 0 12-5.4 12-12v-28c0-6.6-5.4-12-12-12zm108-188.1V464c0 26.5-21.5 48-48 48H48c-26.5 0-48-21.5-48-48V48C0 21.5 21.5 0 48 0h204.1C264.8 0 277 5.1 286 14.1L369.9 98c9 8.9 14.1 21.2 14.1 33.9zm-128-80V128h76.1L256 51.9zM336 464V176H232c-13.3 0-24-10.7-24-24V48H48v416h288z" fill="#111" /></svg>
<svg style="position:absolute;left:1616.9px;top:867.6px" width="18.80" height="25.00" viewBox="0 0 384 512" preserveAspectRatio="none"><path d="M288 248v28c0 6.6-5.4 12-12 12H108c-6.6 0-12-5.4-12-12v-28c0-6.6 5.4-12 12-12h168c6.6 0 12 5.4 12 12zm-12 72H108c-6.6 0-12 5.4-12 12v28c0 6.6 5.4 12 12 12h168c6.6 0 12-5.4 12-12v-28c0-6.6-5.4-12-12-12zm108-188.1V464c0 26.5-21.5 48-48 48H48c-26.5 0-48-21.5-48-48V48C0 21.5 21.5 0 48 0h204.1C264.8 0 277 5.1 286 14.1L369.9 98c9 8.9 14.1 21.2 14.1 33.9zm-128-80V128h76.1L256 51.9zM336 464V176H232c-13.3 0-24-10.7-24-24V48H48v416h288z" fill="#111" /></svg>
<div style="position:absolute;left:1596px;top:0;width:140px;height:1558px;overflow:hidden"><div style="position:absolute;left:55.08px;top:867.59px;white-space:pre;font-family:'Liberation Sans',sans-serif;font-size:26px;font-weight:400;line-height:26px;color:#111;transform:scaleX(0.9620);transform-origin:0 0;-webkit-text-stroke:0.35px #111;">BIL0000322</div></div>
<div style="position:absolute;left:1256.80px;top:867.59px;white-space:pre;font-family:'Liberation Sans',sans-serif;font-size:26px;font-weight:400;line-height:26px;color:#111;transform:scaleX(0.9667);transform-origin:0 0;-webkit-text-stroke:0.35px #111;">American Express</div>
<div style="position:absolute;left:1886.83px;top:867.59px;white-space:pre;font-family:'Liberation Sans',sans-serif;font-size:26px;font-weight:400;line-height:26px;color:#111;transform:scaleX(0.9720);transform-origin:0 0;-webkit-text-stroke:0.35px #111;">488,00 €</div>
<div style="position:absolute;left:2185.52px;top:867.59px;white-space:pre;font-family:'Liberation Sans',sans-serif;font-size:26px;font-weight:400;line-height:26px;color:#111;transform:scaleX(0.9720);transform-origin:0 0;-webkit-text-stroke:0.35px #111;">0,00 €</div>
<div style="position:absolute;left:2427.33px;top:867.59px;white-space:pre;font-family:'Liberation Sans',sans-serif;font-size:26px;font-weight:400;line-height:26px;color:#111;transform:scaleX(0.9720);transform-origin:0 0;-webkit-text-stroke:0.35px #111;">488,00 €</div>
<div style="position:absolute;left:2568px;top:861.6px;width:254px;height:37.700000000000045px;background:#e53935;border:1px solid #d8302c;box-sizing:border-box;border-radius:7px"></div>
<div style="position:absolute;left:2647.25px;top:870.98px;white-space:pre;font-family:'Liberation Sans',sans-serif;font-size:22px;font-weight:700;line-height:22px;color:#fff;transform:scaleX(0.9694);transform-origin:0 0;-webkit-text-stroke:0.45px #fff;">ABIERTO</div>
<div style="position:absolute;left:38px;top:972.0000000000001px;width:2804px;height:2.0px;background:#e1e6ea"></div>
<div style="position:absolute;left:60px;top:922.8000000000001px;width:254px;height:37.700000000000045px;background:#43a047;border:1px solid #3b9140;box-sizing:border-box;border-radius:7px"></div>
<div style="position:absolute;left:137.37px;top:932.18px;white-space:pre;font-family:'Liberation Sans',sans-serif;font-size:22px;font-weight:700;line-height:22px;color:#fff;transform:scaleX(0.9828);transform-origin:0 0;-webkit-text-stroke:0.45px #fff;">RECIBOS</div>
<div style="position:absolute;left:841.24px;top:928.79px;white-space:pre;font-family:'Liberation Sans',sans-serif;font-size:26px;font-weight:400;line-height:26px;color:#111;transform:scaleX(0.9620);transform-origin:0 0;-webkit-text-stroke:0.35px #111;">219</div>
<svg style="position:absolute;left:806.7px;top:928.8000000000001px" width="18.80" height="25.00" viewBox="0 0 384 512" preserveAspectRatio="none"><path d="M288 248v28c0 6.6-5.4 12-12 12H108c-6.6 0-12-5.4-12-12v-28c0-6.6 5.4-12 12-12h168c6.6 0 12 5.4 12 12zm-12 72H108c-6.6 0-12 5.4-12 12v28c0 6.6 5.4 12 12 12h168c6.6 0 12-5.4 12-12v-28c0-6.6-5.4-12-12-12zm108-188.1V464c0 26.5-21.5 48-48 48H48c-26.5 0-48-21.5-48-48V48C0 21.5 21.5 0 48 0h204.1C264.8 0 277 5.1 286 14.1L369.9 98c9 8.9 14.1 21.2 14.1 33.9zm-128-80V128h76.1L256 51.9zM336 464V176H232c-13.3 0-24-10.7-24-24V48H48v416h288z" fill="#111" /></svg>
<div style="position:absolute;left:1256.80px;top:928.79px;white-space:pre;font-family:'Liberation Sans',sans-serif;font-size:26px;font-weight:400;line-height:26px;color:#111;transform:scaleX(0.9667);transform-origin:0 0;-webkit-text-stroke:0.35px #111;">American Express</div>
<div style="position:absolute;left:1886.83px;top:928.79px;white-space:pre;font-family:'Liberation Sans',sans-serif;font-size:26px;font-weight:400;line-height:26px;color:#111;transform:scaleX(0.9720);transform-origin:0 0;-webkit-text-stroke:0.35px #111;">309,00 €</div>
<div style="position:absolute;left:2185.52px;top:928.79px;white-space:pre;font-family:'Liberation Sans',sans-serif;font-size:26px;font-weight:400;line-height:26px;color:#111;transform:scaleX(0.9720);transform-origin:0 0;-webkit-text-stroke:0.35px #111;">0,00 €</div>
<div style="position:absolute;left:2427.33px;top:928.79px;white-space:pre;font-family:'Liberation Sans',sans-serif;font-size:26px;font-weight:400;line-height:26px;color:#111;transform:scaleX(0.9720);transform-origin:0 0;-webkit-text-stroke:0.35px #111;">309,00 €</div>
<div style="position:absolute;left:2568px;top:922.8000000000001px;width:254px;height:37.700000000000045px;background:#e53935;border:1px solid #d8302c;box-sizing:border-box;border-radius:7px"></div>
<div style="position:absolute;left:2647.25px;top:932.18px;white-space:pre;font-family:'Liberation Sans',sans-serif;font-size:22px;font-weight:700;line-height:22px;color:#fff;transform:scaleX(0.9694);transform-origin:0 0;-webkit-text-stroke:0.45px #fff;">ABIERTO</div>
<div style="position:absolute;left:38px;top:1033.2px;width:2804px;height:2.0px;background:#e1e6ea"></div>
<div style="position:absolute;left:60px;top:984.0px;width:254px;height:37.700000000000045px;background:#039be5;border-radius:7px"></div>
<div style="position:absolute;left:135.02px;top:993.38px;white-space:pre;font-family:'Liberation Sans',sans-serif;font-size:22px;font-weight:700;line-height:22px;color:#fff;transform:scaleX(0.9808);transform-origin:0 0;-webkit-text-stroke:0.45px #fff;">FACTURA</div>
<div style="position:absolute;left:841.24px;top:989.99px;white-space:pre;font-family:'Liberation Sans',sans-serif;font-size:26px;font-weight:400;line-height:26px;color:#111;transform:scaleX(0.9620);transform-origin:0 0;-webkit-text-stroke:0.35px #111;">334</div>
<svg style="position:absolute;left:806.7px;top:990.0px" width="18.80" height="25.00" viewBox="0 0 384 512" preserveAspectRatio="none"><path d="M288 248v28c0 6.6-5.4 12-12 12H108c-6.6 0-12-5.4-12-12v-28c0-6.6 5.4-12 12-12h168c6.6 0 12 5.4 12 12zm-12 72H108c-6.6 0-12 5.4-12 12v28c0 6.6 5.4 12 12 12h168c6.6 0 12-5.4 12-12v-28c0-6.6-5.4-12-12-12zm108-188.1V464c0 26.5-21.5 48-48 48H48c-26.5 0-48-21.5-48-48V48C0 21.5 21.5 0 48 0h204.1C264.8 0 277 5.1 286 14.1L369.9 98c9 8.9 14.1 21.2 14.1 33.9zm-128-80V128h76.1L256 51.9zM336 464V176H232c-13.3 0-24-10.7-24-24V48H48v416h288z" fill="#111" /></svg>
<svg style="position:absolute;left:1616.9px;top:990.0px" width="18.80" height="25.00" viewBox="0 0 384 512" preserveAspectRatio="none"><path d="M288 248v28c0 6.6-5.4 12-12 12H108c-6.6 0-12-5.4-12-12v-28c0-6.6 5.4-12 12-12h168c6.6 0 12 5.4 12 12zm-12 72H108c-6.6 0-12 5.4-12 12v28c0 6.6 5.4 12 12 12h168c6.6 0 12-5.4 12-12v-28c0-6.6-5.4-12-12-12zm108-188.1V464c0 26.5-21.5 48-48 48H48c-26.5 0-48-21.5-48-48V48C0 21.5 21.5 0 48 0h204.1C264.8 0 277 5.1 286 14.1L369.9 98c9 8.9 14.1 21.2 14.1 33.9zm-128-80V128h76.1L256 51.9zM336 464V176H232c-13.3 0-24-10.7-24-24V48H48v416h288z" fill="#111" /></svg>
<div style="position:absolute;left:1596px;top:0;width:140px;height:1558px;overflow:hidden"><div style="position:absolute;left:55.08px;top:989.99px;white-space:pre;font-family:'Liberation Sans',sans-serif;font-size:26px;font-weight:400;line-height:26px;color:#111;transform:scaleX(0.9620);transform-origin:0 0;-webkit-text-stroke:0.35px #111;">BIL0000334</div></div>
<div style="position:absolute;left:1256.80px;top:989.99px;white-space:pre;font-family:'Liberation Sans',sans-serif;font-size:26px;font-weight:400;line-height:26px;color:#111;transform:scaleX(0.9667);transform-origin:0 0;-webkit-text-stroke:0.35px #111;">American Express</div>
<div style="position:absolute;left:1865.44px;top:989.99px;white-space:pre;font-family:'Liberation Sans',sans-serif;font-size:26px;font-weight:400;line-height:26px;color:#111;transform:scaleX(0.9720);transform-origin:0 0;-webkit-text-stroke:0.35px #111;">4.052,00 €</div>
<div style="position:absolute;left:2185.52px;top:989.99px;white-space:pre;font-family:'Liberation Sans',sans-serif;font-size:26px;font-weight:400;line-height:26px;color:#111;transform:scaleX(0.9720);transform-origin:0 0;-webkit-text-stroke:0.35px #111;">0,00 €</div>
<div style="position:absolute;left:2405.94px;top:989.99px;white-space:pre;font-family:'Liberation Sans',sans-serif;font-size:26px;font-weight:400;line-height:26px;color:#111;transform:scaleX(0.9720);transform-origin:0 0;-webkit-text-stroke:0.35px #111;">4.052,00 €</div>
<div style="position:absolute;left:2568px;top:984.0px;width:254px;height:37.700000000000045px;background:#e53935;border:1px solid #d8302c;box-sizing:border-box;border-radius:7px"></div>
<div style="position:absolute;left:2647.25px;top:993.38px;white-space:pre;font-family:'Liberation Sans',sans-serif;font-size:22px;font-weight:700;line-height:22px;color:#fff;transform:scaleX(0.9694);transform-origin:0 0;-webkit-text-stroke:0.45px #fff;">ABIERTO</div>
<div style="position:absolute;left:38px;top:1094.4px;width:2804px;height:2.0px;background:#e1e6ea"></div>
<div style="position:absolute;left:60px;top:1045.2px;width:254px;height:37.700000000000045px;background:#039be5;border-radius:7px"></div>
<div style="position:absolute;left:135.02px;top:1054.58px;white-space:pre;font-family:'Liberation Sans',sans-serif;font-size:22px;font-weight:700;line-height:22px;color:#fff;transform:scaleX(0.9808);transform-origin:0 0;-webkit-text-stroke:0.45px #fff;">FACTURA</div>
<div style="position:absolute;left:841.24px;top:1051.19px;white-space:pre;font-family:'Liberation Sans',sans-serif;font-size:26px;font-weight:400;line-height:26px;color:#111;transform:scaleX(0.9620);transform-origin:0 0;-webkit-text-stroke:0.35px #111;">339</div>
<svg style="position:absolute;left:806.7px;top:1051.2px" width="18.80" height="25.00" viewBox="0 0 384 512" preserveAspectRatio="none"><path d="M288 248v28c0 6.6-5.4 12-12 12H108c-6.6 0-12-5.4-12-12v-28c0-6.6 5.4-12 12-12h168c6.6 0 12 5.4 12 12zm-12 72H108c-6.6 0-12 5.4-12 12v28c0 6.6 5.4 12 12 12h168c6.6 0 12-5.4 12-12v-28c0-6.6-5.4-12-12-12zm108-188.1V464c0 26.5-21.5 48-48 48H48c-26.5 0-48-21.5-48-48V48C0 21.5 21.5 0 48 0h204.1C264.8 0 277 5.1 286 14.1L369.9 98c9 8.9 14.1 21.2 14.1 33.9zm-128-80V128h76.1L256 51.9zM336 464V176H232c-13.3 0-24-10.7-24-24V48H48v416h288z" fill="#111" /></svg>
<svg style="position:absolute;left:1616.9px;top:1051.2px" width="18.80" height="25.00" viewBox="0 0 384 512" preserveAspectRatio="none"><path d="M288 248v28c0 6.6-5.4 12-12 12H108c-6.6 0-12-5.4-12-12v-28c0-6.6 5.4-12 12-12h168c6.6 0 12 5.4 12 12zm-12 72H108c-6.6 0-12 5.4-12 12v28c0 6.6 5.4 12 12 12h168c6.6 0 12-5.4 12-12v-28c0-6.6-5.4-12-12-12zm108-188.1V464c0 26.5-21.5 48-48 48H48c-26.5 0-48-21.5-48-48V48C0 21.5 21.5 0 48 0h204.1C264.8 0 277 5.1 286 14.1L369.9 98c9 8.9 14.1 21.2 14.1 33.9zm-128-80V128h76.1L256 51.9zM336 464V176H232c-13.3 0-24-10.7-24-24V48H48v416h288z" fill="#111" /></svg>
<div style="position:absolute;left:1596px;top:0;width:140px;height:1558px;overflow:hidden"><div style="position:absolute;left:55.08px;top:1051.19px;white-space:pre;font-family:'Liberation Sans',sans-serif;font-size:26px;font-weight:400;line-height:26px;color:#111;transform:scaleX(0.9620);transform-origin:0 0;-webkit-text-stroke:0.35px #111;">BIL0000339</div></div>
<div style="position:absolute;left:1256.80px;top:1051.19px;white-space:pre;font-family:'Liberation Sans',sans-serif;font-size:26px;font-weight:400;line-height:26px;color:#111;transform:scaleX(0.9667);transform-origin:0 0;-webkit-text-stroke:0.35px #111;">American Express</div>
<div style="position:absolute;left:1865.44px;top:1051.19px;white-space:pre;font-family:'Liberation Sans',sans-serif;font-size:26px;font-weight:400;line-height:26px;color:#111;transform:scaleX(0.9720);transform-origin:0 0;-webkit-text-stroke:0.35px #111;">3.993,80 €</div>
<div style="position:absolute;left:2185.52px;top:1051.19px;white-space:pre;font-family:'Liberation Sans',sans-serif;font-size:26px;font-weight:400;line-height:26px;color:#111;transform:scaleX(0.9720);transform-origin:0 0;-webkit-text-stroke:0.35px #111;">0,00 €</div>
<div style="position:absolute;left:2405.94px;top:1051.19px;white-space:pre;font-family:'Liberation Sans',sans-serif;font-size:26px;font-weight:400;line-height:26px;color:#111;transform:scaleX(0.9720);transform-origin:0 0;-webkit-text-stroke:0.35px #111;">3.993,80 €</div>
<div style="position:absolute;left:2568px;top:1045.2px;width:254px;height:37.700000000000045px;background:#e53935;border:1px solid #d8302c;box-sizing:border-box;border-radius:7px"></div>
<div style="position:absolute;left:2647.25px;top:1054.58px;white-space:pre;font-family:'Liberation Sans',sans-serif;font-size:22px;font-weight:700;line-height:22px;color:#fff;transform:scaleX(0.9694);transform-origin:0 0;-webkit-text-stroke:0.45px #fff;">ABIERTO</div>
<div style="position:absolute;left:38px;top:1155.6000000000001px;width:2804px;height:2.0px;background:#e1e6ea"></div>
<div style="position:absolute;left:60px;top:1106.4px;width:254px;height:37.700000000000045px;background:#039be5;border-radius:7px"></div>
<div style="position:absolute;left:135.02px;top:1115.78px;white-space:pre;font-family:'Liberation Sans',sans-serif;font-size:22px;font-weight:700;line-height:22px;color:#fff;transform:scaleX(0.9808);transform-origin:0 0;-webkit-text-stroke:0.45px #fff;">FACTURA</div>
<div style="position:absolute;left:841.24px;top:1112.39px;white-space:pre;font-family:'Liberation Sans',sans-serif;font-size:26px;font-weight:400;line-height:26px;color:#111;transform:scaleX(0.9620);transform-origin:0 0;-webkit-text-stroke:0.35px #111;">341</div>
<svg style="position:absolute;left:806.7px;top:1112.4px" width="18.80" height="25.00" viewBox="0 0 384 512" preserveAspectRatio="none"><path d="M288 248v28c0 6.6-5.4 12-12 12H108c-6.6 0-12-5.4-12-12v-28c0-6.6 5.4-12 12-12h168c6.6 0 12 5.4 12 12zm-12 72H108c-6.6 0-12 5.4-12 12v28c0 6.6 5.4 12 12 12h168c6.6 0 12-5.4 12-12v-28c0-6.6-5.4-12-12-12zm108-188.1V464c0 26.5-21.5 48-48 48H48c-26.5 0-48-21.5-48-48V48C0 21.5 21.5 0 48 0h204.1C264.8 0 277 5.1 286 14.1L369.9 98c9 8.9 14.1 21.2 14.1 33.9zm-128-80V128h76.1L256 51.9zM336 464V176H232c-13.3 0-24-10.7-24-24V48H48v416h288z" fill="#111" /></svg>
<svg style="position:absolute;left:1616.9px;top:1112.4px" width="18.80" height="25.00" viewBox="0 0 384 512" preserveAspectRatio="none"><path d="M288 248v28c0 6.6-5.4 12-12 12H108c-6.6 0-12-5.4-12-12v-28c0-6.6 5.4-12 12-12h168c6.6 0 12 5.4 12 12zm-12 72H108c-6.6 0-12 5.4-12 12v28c0 6.6 5.4 12 12 12h168c6.6 0 12-5.4 12-12v-28c0-6.6-5.4-12-12-12zm108-188.1V464c0 26.5-21.5 48-48 48H48c-26.5 0-48-21.5-48-48V48C0 21.5 21.5 0 48 0h204.1C264.8 0 277 5.1 286 14.1L369.9 98c9 8.9 14.1 21.2 14.1 33.9zm-128-80V128h76.1L256 51.9zM336 464V176H232c-13.3 0-24-10.7-24-24V48H48v416h288z" fill="#111" /></svg>
<div style="position:absolute;left:1596px;top:0;width:140px;height:1558px;overflow:hidden"><div style="position:absolute;left:55.08px;top:1112.39px;white-space:pre;font-family:'Liberation Sans',sans-serif;font-size:26px;font-weight:400;line-height:26px;color:#111;transform:scaleX(0.9620);transform-origin:0 0;-webkit-text-stroke:0.35px #111;">BIL0000341</div></div>
<div style="position:absolute;left:1256.80px;top:1112.39px;white-space:pre;font-family:'Liberation Sans',sans-serif;font-size:26px;font-weight:400;line-height:26px;color:#111;transform:scaleX(0.9667);transform-origin:0 0;-webkit-text-stroke:0.35px #111;">American Express</div>
<div style="position:absolute;left:1865.44px;top:1112.39px;white-space:pre;font-family:'Liberation Sans',sans-serif;font-size:26px;font-weight:400;line-height:26px;color:#111;transform:scaleX(0.9720);transform-origin:0 0;-webkit-text-stroke:0.35px #111;">4.062,00 €</div>
<div style="position:absolute;left:2185.52px;top:1112.39px;white-space:pre;font-family:'Liberation Sans',sans-serif;font-size:26px;font-weight:400;line-height:26px;color:#111;transform:scaleX(0.9720);transform-origin:0 0;-webkit-text-stroke:0.35px #111;">0,00 €</div>
<div style="position:absolute;left:2405.94px;top:1112.39px;white-space:pre;font-family:'Liberation Sans',sans-serif;font-size:26px;font-weight:400;line-height:26px;color:#111;transform:scaleX(0.9720);transform-origin:0 0;-webkit-text-stroke:0.35px #111;">4.062,00 €</div>
<div style="position:absolute;left:2568px;top:1106.4px;width:254px;height:37.700000000000045px;background:#e53935;border:1px solid #d8302c;box-sizing:border-box;border-radius:7px"></div>
<div style="position:absolute;left:2647.25px;top:1115.78px;white-space:pre;font-family:'Liberation Sans',sans-serif;font-size:22px;font-weight:700;line-height:22px;color:#fff;transform:scaleX(0.9694);transform-origin:0 0;-webkit-text-stroke:0.45px #fff;">ABIERTO</div>
<div style="position:absolute;left:38px;top:1216.8px;width:2804px;height:2.0px;background:#e1e6ea"></div>
<div style="position:absolute;left:60px;top:1167.6px;width:254px;height:37.700000000000045px;background:#039be5;border-radius:7px"></div>
<div style="position:absolute;left:135.02px;top:1176.98px;white-space:pre;font-family:'Liberation Sans',sans-serif;font-size:22px;font-weight:700;line-height:22px;color:#fff;transform:scaleX(0.9808);transform-origin:0 0;-webkit-text-stroke:0.45px #fff;">FACTURA</div>
<div style="position:absolute;left:841.24px;top:1173.59px;white-space:pre;font-family:'Liberation Sans',sans-serif;font-size:26px;font-weight:400;line-height:26px;color:#111;transform:scaleX(0.9620);transform-origin:0 0;-webkit-text-stroke:0.35px #111;">347</div>
<svg style="position:absolute;left:806.7px;top:1173.6px" width="18.80" height="25.00" viewBox="0 0 384 512" preserveAspectRatio="none"><path d="M288 248v28c0 6.6-5.4 12-12 12H108c-6.6 0-12-5.4-12-12v-28c0-6.6 5.4-12 12-12h168c6.6 0 12 5.4 12 12zm-12 72H108c-6.6 0-12 5.4-12 12v28c0 6.6 5.4 12 12 12h168c6.6 0 12-5.4 12-12v-28c0-6.6-5.4-12-12-12zm108-188.1V464c0 26.5-21.5 48-48 48H48c-26.5 0-48-21.5-48-48V48C0 21.5 21.5 0 48 0h204.1C264.8 0 277 5.1 286 14.1L369.9 98c9 8.9 14.1 21.2 14.1 33.9zm-128-80V128h76.1L256 51.9zM336 464V176H232c-13.3 0-24-10.7-24-24V48H48v416h288z" fill="#111" /></svg>
<svg style="position:absolute;left:1616.9px;top:1173.6px" width="18.80" height="25.00" viewBox="0 0 384 512" preserveAspectRatio="none"><path d="M288 248v28c0 6.6-5.4 12-12 12H108c-6.6 0-12-5.4-12-12v-28c0-6.6 5.4-12 12-12h168c6.6 0 12 5.4 12 12zm-12 72H108c-6.6 0-12 5.4-12 12v28c0 6.6 5.4 12 12 12h168c6.6 0 12-5.4 12-12v-28c0-6.6-5.4-12-12-12zm108-188.1V464c0 26.5-21.5 48-48 48H48c-26.5 0-48-21.5-48-48V48C0 21.5 21.5 0 48 0h204.1C264.8 0 277 5.1 286 14.1L369.9 98c9 8.9 14.1 21.2 14.1 33.9zm-128-80V128h76.1L256 51.9zM336 464V176H232c-13.3 0-24-10.7-24-24V48H48v416h288z" fill="#111" /></svg>
<div style="position:absolute;left:1596px;top:0;width:140px;height:1558px;overflow:hidden"><div style="position:absolute;left:55.08px;top:1173.59px;white-space:pre;font-family:'Liberation Sans',sans-serif;font-size:26px;font-weight:400;line-height:26px;color:#111;transform:scaleX(0.9620);transform-origin:0 0;-webkit-text-stroke:0.35px #111;">BIL0000347</div></div>
<div style="position:absolute;left:1256.80px;top:1173.59px;white-space:pre;font-family:'Liberation Sans',sans-serif;font-size:26px;font-weight:400;line-height:26px;color:#111;transform:scaleX(0.9667);transform-origin:0 0;-webkit-text-stroke:0.35px #111;">American Express</div>
<div style="position:absolute;left:1865.44px;top:1173.59px;white-space:pre;font-family:'Liberation Sans',sans-serif;font-size:26px;font-weight:400;line-height:26px;color:#111;transform:scaleX(0.9720);transform-origin:0 0;-webkit-text-stroke:0.35px #111;">1.319,00 €</div>
<div style="position:absolute;left:2185.52px;top:1173.59px;white-space:pre;font-family:'Liberation Sans',sans-serif;font-size:26px;font-weight:400;line-height:26px;color:#111;transform:scaleX(0.9720);transform-origin:0 0;-webkit-text-stroke:0.35px #111;">0,00 €</div>
<div style="position:absolute;left:2405.94px;top:1173.59px;white-space:pre;font-family:'Liberation Sans',sans-serif;font-size:26px;font-weight:400;line-height:26px;color:#111;transform:scaleX(0.9720);transform-origin:0 0;-webkit-text-stroke:0.35px #111;">1.319,00 €</div>
<div style="position:absolute;left:2568px;top:1167.6px;width:254px;height:37.700000000000045px;background:#e53935;border:1px solid #d8302c;box-sizing:border-box;border-radius:7px"></div>
<div style="position:absolute;left:2647.25px;top:1176.98px;white-space:pre;font-family:'Liberation Sans',sans-serif;font-size:22px;font-weight:700;line-height:22px;color:#fff;transform:scaleX(0.9694);transform-origin:0 0;-webkit-text-stroke:0.45px #fff;">ABIERTO</div>
<div style="position:absolute;left:38px;top:1278.0000000000002px;width:2804px;height:2.0px;background:#e1e6ea"></div>
<div style="position:absolute;left:60px;top:1228.8000000000002px;width:254px;height:37.700000000000045px;background:#039be5;border-radius:7px"></div>
<div style="position:absolute;left:135.02px;top:1238.18px;white-space:pre;font-family:'Liberation Sans',sans-serif;font-size:22px;font-weight:700;line-height:22px;color:#fff;transform:scaleX(0.9808);transform-origin:0 0;-webkit-text-stroke:0.45px #fff;">FACTURA</div>
<div style="position:absolute;left:841.24px;top:1234.79px;white-space:pre;font-family:'Liberation Sans',sans-serif;font-size:26px;font-weight:400;line-height:26px;color:#111;transform:scaleX(0.9620);transform-origin:0 0;-webkit-text-stroke:0.35px #111;">348</div>
<svg style="position:absolute;left:806.7px;top:1234.8000000000002px" width="18.80" height="25.00" viewBox="0 0 384 512" preserveAspectRatio="none"><path d="M288 248v28c0 6.6-5.4 12-12 12H108c-6.6 0-12-5.4-12-12v-28c0-6.6 5.4-12 12-12h168c6.6 0 12 5.4 12 12zm-12 72H108c-6.6 0-12 5.4-12 12v28c0 6.6 5.4 12 12 12h168c6.6 0 12-5.4 12-12v-28c0-6.6-5.4-12-12-12zm108-188.1V464c0 26.5-21.5 48-48 48H48c-26.5 0-48-21.5-48-48V48C0 21.5 21.5 0 48 0h204.1C264.8 0 277 5.1 286 14.1L369.9 98c9 8.9 14.1 21.2 14.1 33.9zm-128-80V128h76.1L256 51.9zM336 464V176H232c-13.3 0-24-10.7-24-24V48H48v416h288z" fill="#111" /></svg>
<svg style="position:absolute;left:1616.9px;top:1234.8000000000002px" width="18.80" height="25.00" viewBox="0 0 384 512" preserveAspectRatio="none"><path d="M288 248v28c0 6.6-5.4 12-12 12H108c-6.6 0-12-5.4-12-12v-28c0-6.6 5.4-12 12-12h168c6.6 0 12 5.4 12 12zm-12 72H108c-6.6 0-12 5.4-12 12v28c0 6.6 5.4 12 12 12h168c6.6 0 12-5.4 12-12v-28c0-6.6-5.4-12-12-12zm108-188.1V464c0 26.5-21.5 48-48 48H48c-26.5 0-48-21.5-48-48V48C0 21.5 21.5 0 48 0h204.1C264.8 0 277 5.1 286 14.1L369.9 98c9 8.9 14.1 21.2 14.1 33.9zm-128-80V128h76.1L256 51.9zM336 464V176H232c-13.3 0-24-10.7-24-24V48H48v416h288z" fill="#111" /></svg>
<div style="position:absolute;left:1596px;top:0;width:140px;height:1558px;overflow:hidden"><div style="position:absolute;left:55.08px;top:1234.79px;white-space:pre;font-family:'Liberation Sans',sans-serif;font-size:26px;font-weight:400;line-height:26px;color:#111;transform:scaleX(0.9620);transform-origin:0 0;-webkit-text-stroke:0.35px #111;">BIL0000348</div></div>
<div style="position:absolute;left:1256.80px;top:1234.79px;white-space:pre;font-family:'Liberation Sans',sans-serif;font-size:26px;font-weight:400;line-height:26px;color:#111;transform:scaleX(0.9667);transform-origin:0 0;-webkit-text-stroke:0.35px #111;">American Express</div>
<div style="position:absolute;left:1865.44px;top:1234.79px;white-space:pre;font-family:'Liberation Sans',sans-serif;font-size:26px;font-weight:400;line-height:26px;color:#111;transform:scaleX(0.9720);transform-origin:0 0;-webkit-text-stroke:0.35px #111;">1.578,00 €</div>
<div style="position:absolute;left:2185.52px;top:1234.79px;white-space:pre;font-family:'Liberation Sans',sans-serif;font-size:26px;font-weight:400;line-height:26px;color:#111;transform:scaleX(0.9720);transform-origin:0 0;-webkit-text-stroke:0.35px #111;">0,00 €</div>
<div style="position:absolute;left:2405.94px;top:1234.79px;white-space:pre;font-family:'Liberation Sans',sans-serif;font-size:26px;font-weight:400;line-height:26px;color:#111;transform:scaleX(0.9720);transform-origin:0 0;-webkit-text-stroke:0.35px #111;">1.578,00 €</div>
<div style="position:absolute;left:2568px;top:1228.8000000000002px;width:254px;height:37.700000000000045px;background:#e53935;border:1px solid #d8302c;box-sizing:border-box;border-radius:7px"></div>
<div style="position:absolute;left:2647.25px;top:1238.18px;white-space:pre;font-family:'Liberation Sans',sans-serif;font-size:22px;font-weight:700;line-height:22px;color:#fff;transform:scaleX(0.9694);transform-origin:0 0;-webkit-text-stroke:0.45px #fff;">ABIERTO</div>
<div style="position:absolute;left:60px;top:1290.0px;width:254px;height:37.700000000000045px;background:#039be5;border-radius:7px"></div>
<div style="position:absolute;left:135.02px;top:1299.38px;white-space:pre;font-family:'Liberation Sans',sans-serif;font-size:22px;font-weight:700;line-height:22px;color:#fff;transform:scaleX(0.9808);transform-origin:0 0;-webkit-text-stroke:0.45px #fff;">FACTURA</div>
<div style="position:absolute;left:841.24px;top:1295.99px;white-space:pre;font-family:'Liberation Sans',sans-serif;font-size:26px;font-weight:400;line-height:26px;color:#111;transform:scaleX(0.9620);transform-origin:0 0;-webkit-text-stroke:0.35px #111;">351</div>
<svg style="position:absolute;left:806.7px;top:1296.0px" width="18.80" height="25.00" viewBox="0 0 384 512" preserveAspectRatio="none"><path d="M288 248v28c0 6.6-5.4 12-12 12H108c-6.6 0-12-5.4-12-12v-28c0-6.6 5.4-12 12-12h168c6.6 0 12 5.4 12 12zm-12 72H108c-6.6 0-12 5.4-12 12v28c0 6.6 5.4 12 12 12h168c6.6 0 12-5.4 12-12v-28c0-6.6-5.4-12-12-12zm108-188.1V464c0 26.5-21.5 48-48 48H48c-26.5 0-48-21.5-48-48V48C0 21.5 21.5 0 48 0h204.1C264.8 0 277 5.1 286 14.1L369.9 98c9 8.9 14.1 21.2 14.1 33.9zm-128-80V128h76.1L256 51.9zM336 464V176H232c-13.3 0-24-10.7-24-24V48H48v416h288z" fill="#111" /></svg>
<svg style="position:absolute;left:1616.9px;top:1296.0px" width="18.80" height="25.00" viewBox="0 0 384 512" preserveAspectRatio="none"><path d="M288 248v28c0 6.6-5.4 12-12 12H108c-6.6 0-12-5.4-12-12v-28c0-6.6 5.4-12 12-12h168c6.6 0 12 5.4 12 12zm-12 72H108c-6.6 0-12 5.4-12 12v28c0 6.6 5.4 12 12 12h168c6.6 0 12-5.4 12-12v-28c0-6.6-5.4-12-12-12zm108-188.1V464c0 26.5-21.5 48-48 48H48c-26.5 0-48-21.5-48-48V48C0 21.5 21.5 0 48 0h204.1C264.8 0 277 5.1 286 14.1L369.9 98c9 8.9 14.1 21.2 14.1 33.9zm-128-80V128h76.1L256 51.9zM336 464V176H232c-13.3 0-24-10.7-24-24V48H48v416h288z" fill="#111" /></svg>
<div style="position:absolute;left:1596px;top:0;width:140px;height:1558px;overflow:hidden"><div style="position:absolute;left:55.08px;top:1295.99px;white-space:pre;font-family:'Liberation Sans',sans-serif;font-size:26px;font-weight:400;line-height:26px;color:#111;transform:scaleX(0.9620);transform-origin:0 0;-webkit-text-stroke:0.35px #111;">BIL0000351</div></div>
<div style="position:absolute;left:1256.80px;top:1295.99px;white-space:pre;font-family:'Liberation Sans',sans-serif;font-size:26px;font-weight:400;line-height:26px;color:#111;transform:scaleX(0.9667);transform-origin:0 0;-webkit-text-stroke:0.35px #111;">American Express</div>
<div style="position:absolute;left:1886.83px;top:1295.99px;white-space:pre;font-family:'Liberation Sans',sans-serif;font-size:26px;font-weight:400;line-height:26px;color:#111;transform:scaleX(0.9720);transform-origin:0 0;-webkit-text-stroke:0.35px #111;">210,00 €</div>
<div style="position:absolute;left:2185.52px;top:1295.99px;white-space:pre;font-family:'Liberation Sans',sans-serif;font-size:26px;font-weight:400;line-height:26px;color:#111;transform:scaleX(0.9720);transform-origin:0 0;-webkit-text-stroke:0.35px #111;">0,00 €</div>
<div style="position:absolute;left:2427.33px;top:1295.99px;white-space:pre;font-family:'Liberation Sans',sans-serif;font-size:26px;font-weight:400;line-height:26px;color:#111;transform:scaleX(0.9720);transform-origin:0 0;-webkit-text-stroke:0.35px #111;">210,00 €</div>
<div style="position:absolute;left:2568px;top:1290.0px;width:254px;height:37.700000000000045px;background:#e53935;border:1px solid #d8302c;box-sizing:border-box;border-radius:7px"></div>
<div style="position:absolute;left:2647.25px;top:1299.38px;white-space:pre;font-family:'Liberation Sans',sans-serif;font-size:22px;font-weight:700;line-height:22px;color:#fff;transform:scaleX(0.9694);transform-origin:0 0;-webkit-text-stroke:0.45px #fff;">ABIERTO</div>
<div style="position:absolute;left:1730px;top:362px;width:6px;height:987px;background:linear-gradient(to right,rgba(0,0,0,0),rgba(0,0,0,.05))"></div>
<div style="position:absolute;left:1736px;top:303.6px;width:2px;height:52.39999999999998px;background:#dfe3e7"></div>
<div style="position:absolute;left:1736px;top:362px;width:2px;height:987px;background:#dfe3e7"></div>
<div style="position:absolute;left:38px;top:1350px;width:1698px;height:14px;background:#eef2f5"></div>
<div style="position:absolute;left:38px;top:1350px;width:1008px;height:14px;background:#b0b4b6"></div>
<div style="position:absolute;left:38.2px;top:1382.2px;width:60.2px;height:61.5px;background:#fff;border:2px solid #d5dbe1;box-sizing:border-box"></div>
<div style="position:absolute;left:96.4px;top:1382.2px;width:55.0px;height:61.5px;background:#fff;border:2px solid #d5dbe1;box-sizing:border-box"></div>
<div style="position:absolute;left:149.4px;top:1382.2px;width:60.79999999999998px;height:61.5px;background:#e3e7ea;border:2px solid #cdd4dc;box-sizing:border-box"></div>
<div style="position:absolute;left:208.2px;top:1382.2px;width:62.0px;height:61.5px;background:#fff;border:2px solid #d5dbe1;box-sizing:border-box"></div>
<div style="position:absolute;left:268.2px;top:1382.2px;width:62.0px;height:61.5px;background:#fff;border:2px solid #d5dbe1;box-sizing:border-box"></div>
<div style="position:absolute;left:328.2px;top:1382.2px;width:61.900000000000034px;height:61.5px;background:#fff;border:2px solid #d5dbe1;box-sizing:border-box"></div>
<div style="position:absolute;left:388.1px;top:1382.2px;width:62.0px;height:61.5px;background:#fff;border:2px solid #d5dbe1;box-sizing:border-box"></div>
<div style="position:absolute;left:448.1px;top:1382.2px;width:56.19999999999999px;height:61.5px;background:#fff;border:2px solid #d5dbe1;box-sizing:border-box"></div>
<div style="position:absolute;left:502.3px;top:1382.2px;width:59.30000000000001px;height:61.5px;background:#fff;border:2px solid #d5dbe1;box-sizing:border-box"></div>
<div style="position:absolute;left:598px;top:1382.2px;width:137.79999999999995px;height:61.5px;background:#fff;border:2px solid #d0d6dd;box-sizing:border-box"></div>
<div style="position:absolute;left:626.70px;top:1399.89px;white-space:pre;font-family:'Liberation Sans',sans-serif;font-size:26px;font-weight:400;line-height:26px;color:#495057;transform:scaleX(1.0245);transform-origin:0 0;">Auto</div>
<div style="position:absolute;left:172.00px;top:1400.39px;white-space:pre;font-family:'Liberation Sans',sans-serif;font-size:26px;font-weight:400;line-height:26px;color:#212529;">1</div>
<div style="position:absolute;left:232.70px;top:1400.39px;white-space:pre;font-family:'Liberation Sans',sans-serif;font-size:26px;font-weight:400;line-height:26px;color:#212529;">2</div>
<div style="position:absolute;left:292.40px;top:1400.39px;white-space:pre;font-family:'Liberation Sans',sans-serif;font-size:26px;font-weight:400;line-height:26px;color:#212529;">3</div>
<div style="position:absolute;left:351.70px;top:1400.39px;white-space:pre;font-family:'Liberation Sans',sans-serif;font-size:26px;font-weight:400;line-height:26px;color:#212529;">4</div>
<div style="position:absolute;left:411.50px;top:1400.39px;white-space:pre;font-family:'Liberation Sans',sans-serif;font-size:26px;font-weight:400;line-height:26px;color:#212529;">5</div>
<div style="position:absolute;left:61.50px;top:1401.88px;white-space:pre;font-family:'Liberation Sans',sans-serif;font-size:24px;font-weight:400;line-height:24px;color:#5c6670;">«</div>
<div style="position:absolute;left:119.00px;top:1401.88px;white-space:pre;font-family:'Liberation Sans',sans-serif;font-size:24px;font-weight:400;line-height:24px;color:#5c6670;">‹</div>
<div style="position:absolute;left:471.50px;top:1401.88px;white-space:pre;font-family:'Liberation Sans',sans-serif;font-size:24px;font-weight:400;line-height:24px;color:#5c6670;">›</div>
<div style="position:absolute;left:524.00px;top:1401.88px;white-space:pre;font-family:'Liberation Sans',sans-serif;font-size:24px;font-weight:400;line-height:24px;color:#5c6670;">»</div>
<svg style="position:absolute;left:706px;top:1403px" width="24" height="18" viewBox="0 0 24 18"><path d="M3.6 4.6 L12 13 L20.4 4.6" fill="none" stroke="#3f4850" stroke-width="4.6" stroke-linejoin="miter" stroke-linecap="butt"/></svg>
<div style="position:absolute;left:2468.97px;top:1400.49px;white-space:pre;font-family:'Liberation Sans',sans-serif;font-size:26px;font-weight:400;line-height:26px;color:#212529;transform:scaleX(1.0173);transform-origin:0 0;">Mostrar 1 a 16 de 83 elementos</div>
<svg style="position:absolute;left:2048px;top:16px" width="30" height="30" viewBox="0 0 30 30"><circle cx="12.4" cy="12.2" r="8.3" fill="none" stroke="#fff" stroke-width="3.8"/><path d="M19 19 L25 25" stroke="#fff" stroke-width="4.2" stroke-linecap="round"/></svg>
<svg style="position:absolute;left:2140.6px;top:17.5px" width="21.90" height="25.50" viewBox="0 0 448 512" preserveAspectRatio="none"><path d="M224 512c35.32 0 63.97-28.65 63.97-64H160.03c0 35.35 28.65 64 63.97 64zm215.39-149.71c-19.32-20.76-55.47-51.99-55.47-154.29 0-77.7-54.48-139.9-127.94-155.160V32c0-17.67-14.32-32-31.98-32s-31.98 14.33-31.98 32v20.84C118.56 68.1 64.08 130.3 64.08 208c0 102.3-36.15 133.53-55.47 154.29-6 6.45-8.66 14.16-8.61 21.71.11 16.4 12.98 32 32.1 32h383.8c19.12 0 32-15.6 32.1-32 .05-7.55-2.61-15.27-8.61-21.710z" fill="#fff" /></svg>
<div style="position:absolute;left:2152px;top:2px;width:54px;height:28px;background:#e74c3c;border-radius:14px"></div>
<div style="position:absolute;left:2163.85px;top:7.07px;white-space:pre;font-family:'Liberation Serif',sans-serif;font-size:20px;font-weight:700;line-height:20px;color:#fff;transform:scaleX(0.9774);transform-origin:0 0;">99+</div>
<svg style="position:absolute;left:2227.5px;top:18.6px" width="24.90" height="24.40" viewBox="0 0 512 512" preserveAspectRatio="none"><path d="M504 255.531c.253 136.64-111.18 248.372-247.82 248.468-59.015.042-113.223-20.53-155.822-54.911-11.077-8.94-11.905-25.541-1.839-35.607l11.267-11.267c8.609-8.609 22.353-9.551 31.891-1.984C173.062 425.135 212.781 440 256 440c101.705 0 184-82.311 184-184 0-101.705-82.311-184-184-184-48.814 0-93.149 18.969-126.068 49.932l50.754 50.754c10.08 10.08 2.941 27.314-11.313 27.314H24c-8.837 0-16-7.163-16-16V38.627c0-14.254 17.234-21.393 27.314-11.314l49.372 49.372C129.209 34.136 189.552 8 256 8c136.81 0 247.747 110.78 248 247.531zm-180.912 78.784l9.823-12.63c8.138-10.463 6.253-25.542-4.21-33.679L288 256.349V152c0-13.255-10.745-24-24-24h-16c-13.255 0-24 10.745-24 24v135.651l65.409 50.874c10.463 8.137 25.541 6.253 33.679-4.21z" fill="#fff" /></svg>
<svg style="position:absolute;left:2309px;top:19px" width="28.70" height="21.50" viewBox="0 0 576 512" preserveAspectRatio="none"><path d="M567.938 243.908L462.25 85.374A48.003 48.003 0 0 0 422.311 64H153.689a48 48 0 0 0-39.938 21.374L8.062 243.908A47.994 47.994 0 0 0 0 270.533V400c0 26.51 21.49 48 48 48h480c26.51 0 48-21.490 48-48V270.533a47.994 47.994 0 0 0-8.062-26.625zM162.252 128h251.497l85.333 128H376l-32 64H232l-32-64H76.918l85.334-128z" fill="#fff" /></svg>
<svg style="position:absolute;left:2510px;top:19.5px" width="29.50" height="22.00" viewBox="0 0 576 512" preserveAspectRatio="none"><path d="M280.37 148.26L96 300.11V464a16 16 0 0 0 16 16l112.06-.29a16 16 0 0 0 15.92-16V368a16 16 0 0 1 16-16h64a16 16 0 0 1 16 16v95.64a16 16 0 0 0 16 16.05L464 480a16 16 0 0 0 16-16V300L295.67 148.26a12.19 12.19 0 0 0-15.3 0zM571.6 251.47L488 182.56V44.05a12 12 0 0 0-12-12h-56a12 12 0 0 0-12 12v72.61L318.47 43a48 48 0 0 0-61 0L4.34 251.47a12 12 0 0 0-1.6 16.9l25.5 31A12 12 0 0 0 45.150 301l235.22-193.74a12.19 12.19 0 0 1 15.3 0L530.9 301a12 12 0 0 0 16.9-1.6l25.5-31a12 12 0 0 0-1.7-16.93z" fill="#fff" /></svg>
<div style="position:absolute;left:2740px;top:8px;width:43px;height:46px;background:#673ab7;border:2.5px solid #fff;border-radius:50%;box-sizing:border-box"></div>
<div style="position:absolute;left:2746.90px;top:19.72px;white-space:pre;font-family:'Liberation Sans',sans-serif;font-size:21px;font-weight:400;line-height:21px;color:#e6dcf5;transform:scaleX(1.0429);transform-origin:0 0;">AD</div>
<div style="position:absolute;left:2831.0px;top:19.7px;width:7.400000000000091px;height:6.400000000000002px;background:#fff;border-radius:1.5px"></div>
<div style="position:absolute;left:2839.9px;top:19.7px;width:7.400000000000091px;height:6.400000000000002px;background:#fff;border-radius:1.5px"></div>
<div style="position:absolute;left:2848.8px;top:19.7px;width:7.400000000000091px;height:6.400000000000002px;background:#fff;border-radius:1.5px"></div>
<div style="position:absolute;left:2831.0px;top:27.299999999999997px;width:7.400000000000091px;height:6.399999999999999px;background:#fff;border-radius:1.5px"></div>
<div style="position:absolute;left:2839.9px;top:27.299999999999997px;width:7.400000000000091px;height:6.399999999999999px;background:#fff;border-radius:1.5px"></div>
<div style="position:absolute;left:2848.8px;top:27.299999999999997px;width:7.400000000000091px;height:6.399999999999999px;background:#fff;border-radius:1.5px"></div>
<div style="position:absolute;left:2831.0px;top:34.9px;width:7.400000000000091px;height:6.399999999999999px;background:#fff;border-radius:1.5px"></div>
<div style="position:absolute;left:2839.9px;top:34.9px;width:7.400000000000091px;height:6.399999999999999px;background:#fff;border-radius:1.5px"></div>
<div style="position:absolute;left:2848.8px;top:34.9px;width:7.400000000000091px;height:6.399999999999999px;background:#fff;border-radius:1.5px"></div>
<svg style="position:absolute;left:339px;top:217px" width="30" height="30" viewBox="0 0 30 30"><circle cx="11.6" cy="11.6" r="7.6" fill="none" stroke="#9a9a9a" stroke-width="3.6"/><path d="M17.5 17.5 L24 24" stroke="#9a9a9a" stroke-width="4" stroke-linecap="round"/></svg>
<svg style="position:absolute;left:2793px;top:217.7px" width="25.60" height="25.30" viewBox="0 0 512 512" preserveAspectRatio="none"><path d="M487.976 0H24.028C2.71 0-8.047 25.866 7.058 40.971L192 225.941V432c0 7.831 3.821 15.17 10.237 19.662l80 55.98C298.02 518.690 320 507.493 320 487.980V225.941l184.947-184.97C520.021 25.896 509.338 0 487.976 0z" fill="#212529" /></svg>
<svg style="position:absolute;left:911.2px;top:325px" width="13.20" height="17.40" viewBox="0 0 320 512" preserveAspectRatio="none"><path d="M41 288h238c21.4 0 32.1 25.9 17 41L177 448c-9.4 9.4-24.6 9.4-33.9 0L24 329c-15.1-15.1-4.4-41 17-41zm255-105L177 64c-9.4-9.4-24.6-9.4-33.9 0L24 183c-15.1 15.1-4.4 41 17 41h238c21.4 0 32.1-25.9 17-41z" fill="#bdbdbd" /></svg>
<svg style="position:absolute;left:1450.8px;top:325px" width="13.20" height="17.40" viewBox="0 0 320 512" preserveAspectRatio="none"><path d="M41 288h238c21.4 0 32.1 25.9 17 41L177 448c-9.4 9.4-24.6 9.4-33.9 0L24 329c-15.1-15.1-4.4-41 17-41zm255-105L177 64c-9.4-9.4-24.6-9.4-33.9 0L24 183c-15.1 15.1-4.4 41 17 41h238c21.4 0 32.1-25.9 17-41z" fill="#bdbdbd" /></svg>
<svg style="position:absolute;left:0;top:0" width="2878" height="400">
<rect x="1161" y="74" width="10.5" height="80" fill="#ff2600"/>
<polygon points="1141.6,153 1191.3,153 1166.5,201" fill="#ff2600"/>
<rect x="2276.7" y="201" width="10.3" height="151.7" fill="#ff2600"/>
<polygon points="2257.7,201.8 2307.4,201.8 2282.6,152.7" fill="#ff2600"/>
<rect x="2778.3" y="0" width="9.7" height="65" fill="#ff2600"/>
<polygon points="2758,64 2808,64 2783,113.3" fill="#ff2600"/>
</svg>
</body></html>
